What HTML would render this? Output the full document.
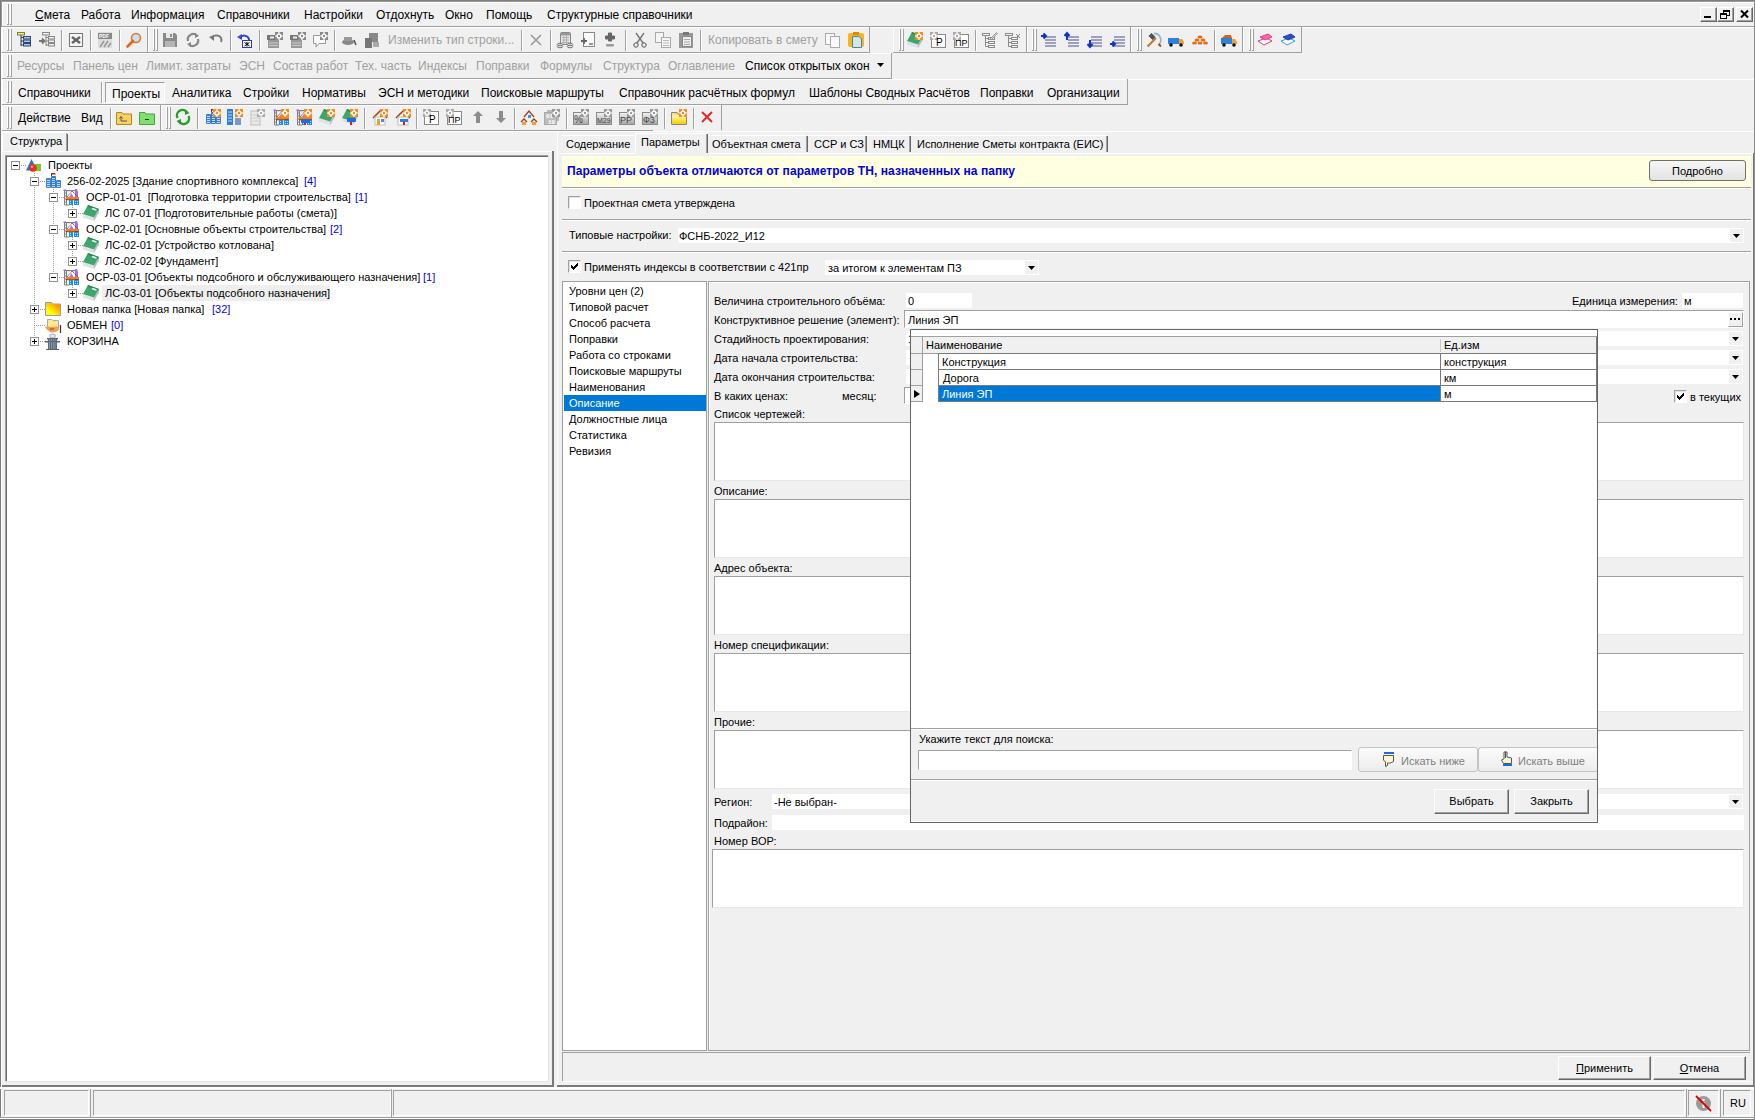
<!DOCTYPE html><html><head><meta charset="utf-8"><style>
html,body{margin:0;padding:0;width:1755px;height:1120px;overflow:hidden;background:#f0f0f0;position:relative}
.t{position:absolute;font-family:"Liberation Sans",sans-serif;font-size:11px;line-height:20px;white-space:nowrap;color:#000}
.r{position:absolute}
svg{position:absolute;overflow:visible}
</style></head><body>
<div class="r" style="left:0px;top:0px;width:1755px;height:1px;background:#7f7f7f;"></div>
<div class="r" style="left:0px;top:1px;width:1755px;height:1px;background:#9a9a9a;"></div>
<div class="r" style="left:0px;top:0px;width:1px;height:1120px;background:#7a7a7a;"></div>
<div class="r" style="left:1px;top:0px;width:1px;height:27px;background:#9a9a9a;"></div>
<div class="r" style="left:1px;top:27px;width:1px;height:1093px;background:#fff;"></div>
<div class="r" style="left:2px;top:2px;width:1753px;height:1px;background:#fff;"></div>
<div class="r" style="left:2px;top:2px;width:1px;height:24px;background:#fff;"></div>
<div class="r" style="left:7px;top:4px;width:1px;height:21px;background:#fff;"></div>
<div class="r" style="left:8px;top:4px;width:1px;height:21px;background:#a0a0a0;"></div>
<div class="r" style="left:10px;top:4px;width:1px;height:21px;background:#fff;"></div>
<div class="r" style="left:11px;top:4px;width:1px;height:21px;background:#a0a0a0;"></div>
<div class="r" style="left:7px;top:24px;width:1px;height:1px;background:#a0a0a0;"></div>
<div class="r" style="left:10px;top:24px;width:1px;height:1px;background:#a0a0a0;"></div>
<div class="t" style="left:35px;top:5px;font-size:12px;"><u>С</u>мета</div>
<div class="t" style="left:81px;top:5px;font-size:12px;">Работа</div>
<div class="t" style="left:131px;top:5px;font-size:12px;">Информация</div>
<div class="t" style="left:217px;top:5px;font-size:12px;">Справочники</div>
<div class="t" style="left:304px;top:5px;font-size:12px;">Настройки</div>
<div class="t" style="left:376px;top:5px;font-size:12px;">Отдохнуть</div>
<div class="t" style="left:445px;top:5px;font-size:12px;">Окно</div>
<div class="t" style="left:486px;top:5px;font-size:12px;">Помощь</div>
<div class="t" style="left:547px;top:5px;font-size:12px;">Структурные справочники</div>
<div class="r" style="left:2px;top:26px;width:1753px;height:1px;background:#a0a0a0;"></div>
<div class="r" style="left:2px;top:27px;width:1753px;height:1px;background:#fff;"></div>
<div class="r" style="left:1700px;top:7px;width:17px;height:15px;background:#f0f0f0;border:1px solid;border-color:#fff #696969 #696969 #fff;box-sizing:border-box;box-shadow:inset -1px -1px #a0a0a0;"></div>
<div class="r" style="left:1704px;top:16px;width:7px;height:2px;background:#000;"></div>
<div class="r" style="left:1717px;top:7px;width:17px;height:15px;background:#f0f0f0;border:1px solid;border-color:#fff #696969 #696969 #fff;box-sizing:border-box;box-shadow:inset -1px -1px #a0a0a0;"></div>
<svg style="left:1716px;top:7px" width="17" height="15"><rect x="7.5" y="3.5" width="6" height="5" fill="none" stroke="#000"/><rect x="7" y="3" width="7" height="2" fill="#000"/><rect x="4.5" y="6.5" width="6" height="5" fill="#f0f0f0" stroke="#000"/><rect x="4" y="6" width="7" height="2" fill="#000"/></svg>
<div class="r" style="left:1736px;top:7px;width:17px;height:15px;background:#f0f0f0;border:1px solid;border-color:#fff #696969 #696969 #fff;box-sizing:border-box;box-shadow:inset -1px -1px #a0a0a0;"></div>
<svg style="left:1736px;top:7px" width="17" height="15"><path d="M5 3.5 L12 10.5 M12 3.5 L5 10.5" stroke="#000" stroke-width="2"/></svg>
<div class="r" style="left:2px;top:27px;width:146px;height:26px;background:#f0f0f0;"></div>
<div class="r" style="left:2px;top:27px;width:146px;height:1px;background:#fff;"></div>
<div class="r" style="left:2px;top:27px;width:1px;height:26px;background:#fff;"></div>
<div class="r" style="left:2px;top:52px;width:146px;height:1px;background:#a0a0a0;"></div>
<div class="r" style="left:147px;top:27px;width:1px;height:26px;background:#a0a0a0;"></div>
<div class="r" style="left:7px;top:29px;width:1px;height:22px;background:#fff;"></div>
<div class="r" style="left:8px;top:29px;width:1px;height:22px;background:#a0a0a0;"></div>
<div class="r" style="left:10px;top:29px;width:1px;height:22px;background:#fff;"></div>
<div class="r" style="left:11px;top:29px;width:1px;height:22px;background:#a0a0a0;"></div>
<div class="r" style="left:7px;top:50px;width:1px;height:1px;background:#a0a0a0;"></div>
<div class="r" style="left:10px;top:50px;width:1px;height:1px;background:#a0a0a0;"></div>
<svg style="left:17px;top:32px" width="16" height="16" viewBox="0 0 16 16"><rect x="0.5" y="0.5" width="7" height="2.5" fill="#ff0" stroke="#777"/><path d="M4 3 V14 M4 5.5 H6 M4 9 H6 M4 13 H6" stroke="#334" fill="none"/><rect x="6.5" y="4.5" width="7" height="2.5" fill="#9cf" stroke="#346"/><rect x="6.5" y="8" width="7" height="2.5" fill="#9cf" stroke="#346"/><rect x="6.5" y="11.5" width="7" height="2.5" fill="#9cf" stroke="#346"/></svg>
<svg style="left:39px;top:32px" width="16" height="16" viewBox="0 0 16 16"><rect x="3.5" y="0.5" width="7" height="2.5" fill="#eee" stroke="#888"/><path d="M7 3 V14 M7 5.5 H9 M7 9 H9 M7 13 H9" stroke="#888" fill="none"/><rect x="9.5" y="4.5" width="6" height="2.5" fill="#eee" stroke="#888"/><rect x="9.5" y="8" width="6" height="2.5" fill="#eee" stroke="#888"/><rect x="9.5" y="11.5" width="6" height="2.5" fill="#eee" stroke="#888"/><path d="M0 9 H5 M3 6.5 L5.5 9 L3 11.5" stroke="#777" stroke-width="1.8" fill="none"/></svg>
<div class="r" style="left:61px;top:30px;width:1px;height:21px;background:#a0a0a0;"></div>
<div class="r" style="left:62px;top:30px;width:1px;height:21px;background:#fff;"></div>
<svg style="left:68px;top:32px" width="16" height="16" viewBox="0 0 16 16"><rect x="1.5" y="1.5" width="13" height="13" fill="#f4f4f4" stroke="#777"/><path d="M4 5 L12 11 M12 5 L4 11" stroke="#666" stroke-width="2.5"/></svg>
<div class="r" style="left:90px;top:30px;width:1px;height:21px;background:#a0a0a0;"></div>
<div class="r" style="left:91px;top:30px;width:1px;height:21px;background:#fff;"></div>
<svg style="left:97px;top:32px" width="16" height="16" viewBox="0 0 16 16"><rect x="1" y="0" width="14" height="16" fill="#ddd"/><rect x="1" y="1" width="14" height="6" fill="#888"/><text x="2" y="6" font-size="5" font-family="Liberation Sans" font-weight="bold" fill="#fff">PDF</text><path d="M3 15 L7 9 M7 15 L11 9 M11 15 L14 11" stroke="#999" stroke-width="1.5"/></svg>
<div class="r" style="left:119px;top:30px;width:1px;height:21px;background:#a0a0a0;"></div>
<div class="r" style="left:120px;top:30px;width:1px;height:21px;background:#fff;"></div>
<svg style="left:126px;top:32px" width="16" height="16" viewBox="0 0 16 16"><circle cx="10" cy="6" r="4.5" fill="#cde" stroke="#d97930" stroke-width="1.6"/><path d="M7 9 L1.5 14.5" stroke="#e0661a" stroke-width="2.6" stroke-linecap="round"/></svg>
<div class="r" style="left:148px;top:27px;width:722px;height:26px;background:#f0f0f0;"></div>
<div class="r" style="left:148px;top:27px;width:722px;height:1px;background:#fff;"></div>
<div class="r" style="left:148px;top:27px;width:1px;height:26px;background:#fff;"></div>
<div class="r" style="left:148px;top:52px;width:722px;height:1px;background:#a0a0a0;"></div>
<div class="r" style="left:869px;top:27px;width:1px;height:26px;background:#a0a0a0;"></div>
<div class="r" style="left:153px;top:29px;width:1px;height:22px;background:#fff;"></div>
<div class="r" style="left:154px;top:29px;width:1px;height:22px;background:#a0a0a0;"></div>
<div class="r" style="left:156px;top:29px;width:1px;height:22px;background:#fff;"></div>
<div class="r" style="left:157px;top:29px;width:1px;height:22px;background:#a0a0a0;"></div>
<div class="r" style="left:153px;top:50px;width:1px;height:1px;background:#a0a0a0;"></div>
<div class="r" style="left:156px;top:50px;width:1px;height:1px;background:#a0a0a0;"></div>
<svg style="left:162px;top:32px" width="16" height="16" viewBox="0 0 16 16"><path d="M1 1 H13 L15 3 V15 H1 Z" fill="#8a8a8a"/><rect x="4" y="1" width="7" height="5" fill="#e8e8e8"/><rect x="8" y="2" width="2" height="3" fill="#8a8a8a"/><rect x="3" y="9" width="10" height="6" fill="#b5b5b5"/></svg>
<svg style="left:185px;top:32px" width="16" height="16" viewBox="0 0 16 16"><path d="M3 9 A5.5 5.5 0 0 1 12 3.5 M13 7 A5.5 5.5 0 0 1 4 12.5" stroke="#888" stroke-width="2.2" fill="none"/><path d="M10 1 L14 4 L10 6 Z M6 15 L2 12 L6 10 Z" fill="#888"/></svg>
<svg style="left:208px;top:32px" width="16" height="16" viewBox="0 0 16 16"><path d="M4 6 A5 4.5 0 0 1 13 10" stroke="#777" stroke-width="2" fill="none"/><path d="M1 5 L6 3 L6 9 Z" fill="#777"/></svg>
<div class="r" style="left:230px;top:30px;width:1px;height:21px;background:#a0a0a0;"></div>
<div class="r" style="left:231px;top:30px;width:1px;height:21px;background:#fff;"></div>
<svg style="left:237px;top:32px" width="16" height="16" viewBox="0 0 16 16"><path d="M3 6 A5 5 0 0 1 12 7 V9" stroke="#3348d0" stroke-width="2" fill="none"/><path d="M0 5 L5 2 L5 8 Z" fill="#3348d0"/><rect x="5.5" y="8.5" width="9" height="7" fill="#fff" stroke="#2a3bb0"/><path d="M7.5 10.5 L12.5 14 M12.5 10.5 L7.5 14 M10 10 V14.5" stroke="#000" stroke-width="1"/></svg>
<div class="r" style="left:259px;top:30px;width:1px;height:21px;background:#a0a0a0;"></div>
<div class="r" style="left:260px;top:30px;width:1px;height:21px;background:#fff;"></div>
<svg style="left:267px;top:32px" width="16" height="16" viewBox="0 0 16 16"><rect x="0" y="3" width="13" height="5" fill="#777"/><rect x="1" y="8" width="11" height="8" fill="#999"/><path d="M2 11 H11 M2 13.5 H11" stroke="#ccc"/><rect x="3" y="4.5" width="4" height="2" fill="#eee"/><rect x="8" y="0" width="8" height="8" fill="#888"/><circle cx="12" cy="4" r="2.6" fill="#fff"/><path d="M12 0 V8 M8 4 H16" stroke="#fff" stroke-width="1.2"/><circle cx="12" cy="4" r="1.2" fill="#888"/></svg>
<svg style="left:290px;top:32px" width="16" height="16" viewBox="0 0 16 16"><rect x="0" y="3" width="13" height="5" fill="#777"/><rect x="1" y="8" width="11" height="8" fill="#999"/><path d="M2 11 H11 M2 13.5 H11" stroke="#ccc"/><rect x="3" y="4.5" width="4" height="2" fill="#eee"/><rect x="8" y="0" width="8" height="8" fill="#888"/><circle cx="12" cy="4" r="2.6" fill="#fff"/><path d="M12 0 V8 M8 4 H16" stroke="#fff" stroke-width="1.2"/><circle cx="12" cy="4" r="1.2" fill="#888"/></svg>
<svg style="left:312px;top:32px" width="16" height="16" viewBox="0 0 16 16"><path d="M1.5 3.5 H13.5 V11.5 H7 L4 15 V11.5 H1.5 Z" fill="#fafafa" stroke="#999"/><rect x="8" y="0" width="8" height="8" fill="#888"/><circle cx="12" cy="4" r="2.6" fill="#fff"/><path d="M12 0 V8 M8 4 H16" stroke="#fff" stroke-width="1.2"/><circle cx="12" cy="4" r="1.2" fill="#888"/></svg>
<div class="r" style="left:334px;top:30px;width:1px;height:21px;background:#a0a0a0;"></div>
<div class="r" style="left:335px;top:30px;width:1px;height:21px;background:#fff;"></div>
<svg style="left:341px;top:32px" width="16" height="16" viewBox="0 0 16 16"><ellipse cx="7" cy="10" rx="6" ry="3" fill="#888"/><rect x="3" y="5" width="8" height="4" fill="#999"/><path d="M13 8 L15 13" stroke="#555" stroke-width="1.5"/></svg>
<svg style="left:364px;top:32px" width="16" height="16" viewBox="0 0 16 16"><rect x="5" y="1" width="9" height="9" fill="#888"/><rect x="1" y="6" width="7" height="10" fill="#777"/><rect x="9" y="10" width="6" height="5" fill="#aaa"/></svg>
<div class="t" style="left:388px;top:30px;font-size:12px;color:#a0a0a0;">Изменить тип строки...</div>
<div class="r" style="left:521px;top:30px;width:1px;height:21px;background:#a0a0a0;"></div>
<div class="r" style="left:522px;top:30px;width:1px;height:21px;background:#fff;"></div>
<svg style="left:529px;top:33px" width="16" height="16" viewBox="0 0 16 16"><path d="M2 2 L12 12 M12 2 L2 12" stroke="#999" stroke-width="1.6"/></svg>
<div class="r" style="left:550px;top:30px;width:1px;height:21px;background:#a0a0a0;"></div>
<div class="r" style="left:551px;top:30px;width:1px;height:21px;background:#fff;"></div>
<svg style="left:557px;top:32px" width="16" height="16" viewBox="0 0 16 16"><rect x="3.5" y="0.5" width="10" height="12" rx="1" fill="#e6e6e6" stroke="#888"/><rect x="4" y="1" width="9" height="2.5" fill="#999"/><path d="M5 5.5 H12 M5 8 H12 M5 10.5 H12 M7 4 V12 M9.5 4 V12" stroke="#b0b0b0"/><ellipse cx="3" cy="12.5" rx="2.8" ry="1.3" fill="#ddd" stroke="#777"/><ellipse cx="3" cy="14.5" rx="2.8" ry="1.3" fill="#ddd" stroke="#777"/><ellipse cx="13" cy="12.5" rx="2.8" ry="1.3" fill="#ddd" stroke="#777"/><ellipse cx="13" cy="14.5" rx="2.8" ry="1.3" fill="#ddd" stroke="#777"/></svg>
<svg style="left:580px;top:32px" width="16" height="16" viewBox="0 0 16 16"><rect x="3.5" y="0.5" width="11" height="14" fill="#fafafa" stroke="#888"/><path d="M1 9 H7 M4 6 V12" stroke="#666" stroke-width="1.8"/><path d="M9 12 H13" stroke="#777" stroke-width="1.5"/></svg>
<svg style="left:602px;top:32px" width="16" height="16" viewBox="0 0 16 16"><path d="M6.5 1 H9.5 V4 H12.5 V7 H9.5 V9 H6.5 V7 H3.5 V4 H6.5 Z" fill="#666" stroke="#666" stroke-linejoin="round"/><rect x="4" y="12" width="8" height="2.5" rx="1" fill="#999"/></svg>
<div class="r" style="left:625px;top:30px;width:1px;height:21px;background:#a0a0a0;"></div>
<div class="r" style="left:626px;top:30px;width:1px;height:21px;background:#fff;"></div>
<svg style="left:632px;top:32px" width="16" height="16" viewBox="0 0 16 16"><path d="M4 1 L11 11 M12 1 L5 11" stroke="#777" stroke-width="1.4"/><circle cx="4" cy="13" r="2.2" fill="none" stroke="#555"/><circle cx="12" cy="13" r="2.2" fill="none" stroke="#555"/></svg>
<svg style="left:655px;top:32px" width="16" height="16" viewBox="0 0 16 16"><rect x="0.5" y="0.5" width="8" height="10" fill="#f5f5f5" stroke="#aaa"/><rect x="6.5" y="5.5" width="9" height="10" fill="#f5f5f5" stroke="#aaa"/><path d="M8 8.5 H14 M8 11 H14 M8 13.5 H14" stroke="#bbb"/></svg>
<svg style="left:678px;top:32px" width="16" height="16" viewBox="0 0 16 16"><rect x="1" y="1" width="14" height="15" fill="#999"/><rect x="5" y="0" width="6" height="3" fill="#777"/><rect x="4.5" y="4.5" width="9" height="10" fill="#eee" stroke="#888"/><path d="M6 7.5 H12 M6 10 H12 M6 12.5 H12" stroke="#aaa"/></svg>
<div class="r" style="left:700px;top:30px;width:1px;height:21px;background:#a0a0a0;"></div>
<div class="r" style="left:701px;top:30px;width:1px;height:21px;background:#fff;"></div>
<div class="t" style="left:708px;top:30px;font-size:12px;color:#a0a0a0;">Копировать в смету</div>
<svg style="left:825px;top:32px" width="16" height="16" viewBox="0 0 16 16"><rect x="0.5" y="1.5" width="9" height="11" fill="#fafafa" stroke="#aaa"/><rect x="5.5" y="4.5" width="9" height="11" fill="#fafafa" stroke="#aaa"/></svg>
<svg style="left:848px;top:32px" width="16" height="16" viewBox="0 0 16 16"><rect x="0" y="1" width="16" height="14" rx="2" fill="#f5b520"/><rect x="5" y="0" width="6" height="3" fill="#d58a10"/><path d="M4.5 4.5 H11 L13.5 7 V15.5 H4.5 Z" fill="#cfe8f0" stroke="#5a7f90"/></svg>
<div class="r" style="left:893px;top:27px;width:134px;height:26px;background:#f0f0f0;"></div>
<div class="r" style="left:893px;top:27px;width:134px;height:1px;background:#fff;"></div>
<div class="r" style="left:893px;top:27px;width:1px;height:26px;background:#fff;"></div>
<div class="r" style="left:893px;top:52px;width:134px;height:1px;background:#a0a0a0;"></div>
<div class="r" style="left:1026px;top:27px;width:1px;height:26px;background:#a0a0a0;"></div>
<div class="r" style="left:899px;top:29px;width:1px;height:22px;background:#fff;"></div>
<div class="r" style="left:900px;top:29px;width:1px;height:22px;background:#a0a0a0;"></div>
<div class="r" style="left:902px;top:29px;width:1px;height:22px;background:#fff;"></div>
<div class="r" style="left:903px;top:29px;width:1px;height:22px;background:#a0a0a0;"></div>
<div class="r" style="left:899px;top:50px;width:1px;height:1px;background:#a0a0a0;"></div>
<div class="r" style="left:902px;top:50px;width:1px;height:1px;background:#a0a0a0;"></div>
<svg style="left:907px;top:32px" width="16" height="16" viewBox="0 0 16 16"><path d="M0 9 L11 12.5 L11 16 L0 12.5 Z" fill="#dde2e8"/><path d="M11 12.5 L16 4 L16 7.5 L11 16 Z" fill="#b5bcc5"/><path d="M5 0 L16 4 L11 12.5 L0 9 Z" fill="#3ea56c"/><path d="M5 0 L16 4 L15 5.5 L4.5 1.5 Z" fill="#2a8a55"/><path d="M9 3.5 L13.5 5" stroke="#e8f8ee" stroke-width="1.4"/><rect x="8" y="0" width="8" height="8" fill="#f28a1e"/><circle cx="12" cy="4" r="2.6" fill="#fff"/><path d="M12 0 V8 M8 4 H16" stroke="#fff" stroke-width="1.2"/><circle cx="12" cy="4" r="1.2" fill="#f28a1e"/></svg>
<svg style="left:930px;top:32px" width="16" height="16" viewBox="0 0 16 16"><rect x="1.5" y="2.5" width="14" height="13" fill="#fff" stroke="#888"/><rect x="0" y="0" width="8" height="8" fill="#aaa"/><circle cx="4" cy="4" r="2.6" fill="#fff"/><path d="M4 0 V8 M0 4 H8" stroke="#fff" stroke-width="1.2"/><circle cx="4" cy="4" r="1.2" fill="#aaa"/><text x="6" y="14" font-size="10" font-family="Liberation Sans" fill="#000">Р</text></svg>
<svg style="left:953px;top:32px" width="16" height="16" viewBox="0 0 16 16"><rect x="1.5" y="2.5" width="14" height="13" fill="#fff" stroke="#888"/><rect x="0" y="0" width="8" height="8" fill="#aaa"/><circle cx="4" cy="4" r="2.6" fill="#fff"/><path d="M4 0 V8 M0 4 H8" stroke="#fff" stroke-width="1.2"/><circle cx="4" cy="4" r="1.2" fill="#aaa"/><text x="2" y="14" font-size="9" font-family="Liberation Sans" fill="#000">ПР</text></svg>
<div class="r" style="left:975px;top:30px;width:1px;height:21px;background:#a0a0a0;"></div>
<div class="r" style="left:976px;top:30px;width:1px;height:21px;background:#fff;"></div>
<svg style="left:982px;top:32px" width="16" height="16" viewBox="0 0 16 16"><rect x="0.5" y="1.5" width="7" height="2" fill="#f4f4f4" stroke="#8a8a8a"/><path d="M3.5 3.5 V14.5 M3.5 6.5 H6 M3.5 10.5 H6 M3.5 14.5 H6" stroke="#8a8a8a" fill="none"/><rect x="6.5" y="5.5" width="6" height="2" fill="#f4f4f4" stroke="#8a8a8a"/><rect x="6.5" y="9.5" width="6" height="2" fill="#f4f4f4" stroke="#8a8a8a"/><rect x="6.5" y="13.5" width="6" height="2" fill="#f4f4f4" stroke="#8a8a8a"/><path d="M8 7 L14.5 0.5 L15.5 1.5 L9 8 Z" fill="#d8d8d8" stroke="#8a8a8a" stroke-width="0.8"/></svg>
<svg style="left:1005px;top:32px" width="16" height="16" viewBox="0 0 16 16"><rect x="0.5" y="1.5" width="7" height="2" fill="#f4f4f4" stroke="#8a8a8a"/><path d="M3.5 3.5 V14.5 M3.5 6.5 H6 M3.5 10.5 H6 M3.5 14.5 H6" stroke="#8a8a8a" fill="none"/><rect x="6.5" y="5.5" width="6" height="2" fill="#f4f4f4" stroke="#8a8a8a"/><rect x="6.5" y="9.5" width="6" height="2" fill="#f4f4f4" stroke="#8a8a8a"/><rect x="6.5" y="13.5" width="6" height="2" fill="#f4f4f4" stroke="#8a8a8a"/><path d="M11 2 L15 6 M15 2 L11 6" stroke="#8a8a8a" stroke-width="1"/></svg>
<div class="r" style="left:1027px;top:27px;width:104px;height:26px;background:#f0f0f0;"></div>
<div class="r" style="left:1027px;top:27px;width:104px;height:1px;background:#fff;"></div>
<div class="r" style="left:1027px;top:27px;width:1px;height:26px;background:#fff;"></div>
<div class="r" style="left:1027px;top:52px;width:104px;height:1px;background:#a0a0a0;"></div>
<div class="r" style="left:1130px;top:27px;width:1px;height:26px;background:#a0a0a0;"></div>
<div class="r" style="left:1032px;top:29px;width:1px;height:22px;background:#fff;"></div>
<div class="r" style="left:1033px;top:29px;width:1px;height:22px;background:#a0a0a0;"></div>
<div class="r" style="left:1035px;top:29px;width:1px;height:22px;background:#fff;"></div>
<div class="r" style="left:1036px;top:29px;width:1px;height:22px;background:#a0a0a0;"></div>
<div class="r" style="left:1032px;top:50px;width:1px;height:1px;background:#a0a0a0;"></div>
<div class="r" style="left:1035px;top:50px;width:1px;height:1px;background:#a0a0a0;"></div>
<svg style="left:1041px;top:32px" width="16" height="16" viewBox="0 0 16 16"><path d="M4 5 H15 M4 8 H15 M4 11 H15 M4 14 H15" stroke="#4a5090" stroke-width="1.1"/><path d="M0 4 H4 M2.5 1.5 L5 4 L2.5 6.5" stroke="#1030d0" stroke-width="2" fill="none"/></svg>
<svg style="left:1064px;top:32px" width="16" height="16" viewBox="0 0 16 16"><path d="M4 5 H15 M4 8 H15 M4 11 H15 M4 14 H15" stroke="#4a5090" stroke-width="1.1"/><path d="M3 8 V2 M0.5 4 L3 1 L5.5 4" stroke="#1030d0" stroke-width="2" fill="none"/></svg>
<svg style="left:1087px;top:32px" width="16" height="16" viewBox="0 0 16 16"><path d="M4 5 H15 M4 8 H15 M4 11 H15 M4 14 H15" stroke="#4a5090" stroke-width="1.1"/><path d="M3 8 V14 M0.5 12 L3 15 L5.5 12" stroke="#1030d0" stroke-width="2" fill="none"/></svg>
<svg style="left:1110px;top:32px" width="16" height="16" viewBox="0 0 16 16"><path d="M4 5 H15 M4 8 H15 M4 11 H15 M4 14 H15" stroke="#4a5090" stroke-width="1.1"/><path d="M0 12 H4 M2.5 9.5 L5 12 L2.5 14.5" stroke="#1030d0" stroke-width="2" fill="none"/></svg>
<div class="r" style="left:1131px;top:27px;width:112px;height:26px;background:#f0f0f0;"></div>
<div class="r" style="left:1131px;top:27px;width:112px;height:1px;background:#fff;"></div>
<div class="r" style="left:1131px;top:27px;width:1px;height:26px;background:#fff;"></div>
<div class="r" style="left:1131px;top:52px;width:112px;height:1px;background:#a0a0a0;"></div>
<div class="r" style="left:1242px;top:27px;width:1px;height:26px;background:#a0a0a0;"></div>
<div class="r" style="left:1137px;top:29px;width:1px;height:22px;background:#fff;"></div>
<div class="r" style="left:1138px;top:29px;width:1px;height:22px;background:#a0a0a0;"></div>
<div class="r" style="left:1140px;top:29px;width:1px;height:22px;background:#fff;"></div>
<div class="r" style="left:1141px;top:29px;width:1px;height:22px;background:#a0a0a0;"></div>
<div class="r" style="left:1137px;top:50px;width:1px;height:1px;background:#a0a0a0;"></div>
<div class="r" style="left:1140px;top:50px;width:1px;height:1px;background:#a0a0a0;"></div>
<svg style="left:1146px;top:32px" width="16" height="16" viewBox="0 0 16 16"><path d="M8 1.5 A6.5 6.5 0 0 1 13 12.5" stroke="#9ab8c0" stroke-width="1.8" fill="none"/><path d="M12.5 12 L15 14.5" stroke="#a05020" stroke-width="2"/><path d="M1.5 14.5 L10 6" stroke="#c07830" stroke-width="2.2"/><path d="M2.5 4 L5.5 1 L9.5 5 L6.5 8 Z" fill="#505050"/></svg>
<svg style="left:1168px;top:32px" width="16" height="16" viewBox="0 0 16 16"><rect x="0" y="6" width="11" height="6" fill="#2d7fe0"/><path d="M11 7 H14 L16 10 V12 H11 Z" fill="#f0a030"/><circle cx="3" cy="13" r="1.8" fill="#111"/><circle cx="13" cy="13" r="1.8" fill="#111"/></svg>
<svg style="left:1192px;top:32px" width="16" height="16" viewBox="0 0 16 16"><ellipse cx="8" cy="5" rx="2.5" ry="1.5" fill="#e86a10"/><ellipse cx="5" cy="8" rx="2.5" ry="1.5" fill="#e86a10"/><ellipse cx="11" cy="8" rx="2.5" ry="1.5" fill="#e86a10"/><ellipse cx="2.5" cy="11" rx="2.5" ry="1.5" fill="#e86a10"/><ellipse cx="8" cy="11" rx="2.5" ry="1.5" fill="#e86a10"/><ellipse cx="13.5" cy="11" rx="2.5" ry="1.5" fill="#e86a10"/></svg>
<div class="r" style="left:1214px;top:30px;width:1px;height:21px;background:#a0a0a0;"></div>
<div class="r" style="left:1215px;top:30px;width:1px;height:21px;background:#fff;"></div>
<svg style="left:1221px;top:32px" width="16" height="16" viewBox="0 0 16 16"><rect x="0" y="6" width="11" height="6" fill="#2d7fe0"/><path d="M1 6 L4 3 H10 L11 6 Z" fill="#e06010"/><path d="M11 7 H14 L16 10 V12 H11 Z" fill="#f0a030"/><circle cx="3" cy="13" r="1.8" fill="#111"/><circle cx="13" cy="13" r="1.8" fill="#111"/></svg>
<div class="r" style="left:1243px;top:27px;width:59px;height:26px;background:#f0f0f0;"></div>
<div class="r" style="left:1243px;top:27px;width:59px;height:1px;background:#fff;"></div>
<div class="r" style="left:1243px;top:27px;width:1px;height:26px;background:#fff;"></div>
<div class="r" style="left:1243px;top:52px;width:59px;height:1px;background:#a0a0a0;"></div>
<div class="r" style="left:1301px;top:27px;width:1px;height:26px;background:#a0a0a0;"></div>
<div class="r" style="left:1249px;top:29px;width:1px;height:22px;background:#fff;"></div>
<div class="r" style="left:1250px;top:29px;width:1px;height:22px;background:#a0a0a0;"></div>
<div class="r" style="left:1252px;top:29px;width:1px;height:22px;background:#fff;"></div>
<div class="r" style="left:1253px;top:29px;width:1px;height:22px;background:#a0a0a0;"></div>
<div class="r" style="left:1249px;top:50px;width:1px;height:1px;background:#a0a0a0;"></div>
<div class="r" style="left:1252px;top:50px;width:1px;height:1px;background:#a0a0a0;"></div>
<svg style="left:1257px;top:32px" width="16" height="16" viewBox="0 0 16 16"><path d="M1 9 L9 6 L15 9 L7 13 Z" fill="#fff" stroke="#e04050"/><path d="M3 5 L11 2 L15 5 L8 8 Z" fill="#f068b0" stroke="#e04080"/></svg>
<svg style="left:1280px;top:32px" width="16" height="16" viewBox="0 0 16 16"><path d="M1 9 L9 6 L15 9 L7 13 Z" fill="#fff" stroke="#30a0e0"/><path d="M3 5 L11 2 L15 5 L8 8 Z" fill="#3050d0" stroke="#2040a0"/></svg>
<div class="r" style="left:2px;top:53px;width:890px;height:26px;background:#f0f0f0;"></div>
<div class="r" style="left:2px;top:53px;width:890px;height:1px;background:#fff;"></div>
<div class="r" style="left:2px;top:53px;width:1px;height:26px;background:#fff;"></div>
<div class="r" style="left:2px;top:78px;width:890px;height:1px;background:#a0a0a0;"></div>
<div class="r" style="left:891px;top:53px;width:1px;height:26px;background:#a0a0a0;"></div>
<div class="r" style="left:7px;top:55px;width:1px;height:22px;background:#fff;"></div>
<div class="r" style="left:8px;top:55px;width:1px;height:22px;background:#a0a0a0;"></div>
<div class="r" style="left:10px;top:55px;width:1px;height:22px;background:#fff;"></div>
<div class="r" style="left:11px;top:55px;width:1px;height:22px;background:#a0a0a0;"></div>
<div class="r" style="left:7px;top:76px;width:1px;height:1px;background:#a0a0a0;"></div>
<div class="r" style="left:10px;top:76px;width:1px;height:1px;background:#a0a0a0;"></div>
<div class="t" style="left:17px;top:56px;font-size:12px;color:#a0a0a0;">Ресурсы</div>
<div class="t" style="left:73px;top:56px;font-size:12px;color:#a0a0a0;">Панель цен</div>
<div class="t" style="left:146px;top:56px;font-size:12px;color:#a0a0a0;">Лимит. затраты</div>
<div class="t" style="left:239px;top:56px;font-size:12px;color:#a0a0a0;">ЭСН</div>
<div class="t" style="left:273px;top:56px;font-size:12px;color:#a0a0a0;">Состав работ</div>
<div class="t" style="left:355px;top:56px;font-size:12px;color:#a0a0a0;">Тех. часть</div>
<div class="t" style="left:418px;top:56px;font-size:12px;color:#a0a0a0;">Индексы</div>
<div class="t" style="left:476px;top:56px;font-size:12px;color:#a0a0a0;">Поправки</div>
<div class="t" style="left:540px;top:56px;font-size:12px;color:#a0a0a0;">Формулы</div>
<div class="t" style="left:603px;top:56px;font-size:12px;color:#a0a0a0;">Структура</div>
<div class="t" style="left:668px;top:56px;font-size:12px;color:#a0a0a0;">Оглавление</div>
<div class="t" style="left:745px;top:56px;font-size:12px;">Список открытых окон</div>
<svg style="left:877px;top:63px" width="7" height="4" viewBox="0 0 7 4"><path d="M0 0 H7 L3.5 4 Z" fill="#000"/></svg>
<div class="r" style="left:2px;top:79px;width:1753px;height:1px;background:#fff;"></div>
<div class="r" style="left:2px;top:79px;width:1126px;height:26px;background:#f0f0f0;"></div>
<div class="r" style="left:2px;top:79px;width:1126px;height:1px;background:#fff;"></div>
<div class="r" style="left:2px;top:79px;width:1px;height:26px;background:#fff;"></div>
<div class="r" style="left:2px;top:104px;width:1126px;height:1px;background:#a0a0a0;"></div>
<div class="r" style="left:1127px;top:79px;width:1px;height:26px;background:#a0a0a0;"></div>
<div class="r" style="left:7px;top:81px;width:1px;height:22px;background:#fff;"></div>
<div class="r" style="left:8px;top:81px;width:1px;height:22px;background:#a0a0a0;"></div>
<div class="r" style="left:10px;top:81px;width:1px;height:22px;background:#fff;"></div>
<div class="r" style="left:11px;top:81px;width:1px;height:22px;background:#a0a0a0;"></div>
<div class="r" style="left:7px;top:102px;width:1px;height:1px;background:#a0a0a0;"></div>
<div class="r" style="left:10px;top:102px;width:1px;height:1px;background:#a0a0a0;"></div>
<div class="t" style="left:18px;top:83px;font-size:12px;">Справочники</div>
<div class="r" style="left:101px;top:82px;width:1px;height:21px;background:#a0a0a0;"></div>
<div class="r" style="left:102px;top:82px;width:1px;height:21px;background:#fff;"></div>
<div class="r" style="left:105px;top:82px;width:60px;height:21px;background:#f5f5f5;border:1px solid;border-color:#a0a0a0 #fff #fff #a0a0a0;box-sizing:border-box;"></div>
<div class="t" style="left:112px;top:84px;font-size:12px;">Проекты</div>
<div class="t" style="left:172px;top:83px;font-size:12px;">Аналитика</div>
<div class="t" style="left:243px;top:83px;font-size:12px;">Стройки</div>
<div class="t" style="left:302px;top:83px;font-size:12px;">Нормативы</div>
<div class="t" style="left:378px;top:83px;font-size:12px;">ЭСН и методики</div>
<div class="t" style="left:481px;top:83px;font-size:12px;">Поисковые маршруты</div>
<div class="t" style="left:619px;top:83px;font-size:12px;">Справочник расчётных формул</div>
<div class="t" style="left:809px;top:83px;font-size:12px;">Шаблоны Сводных Расчётов</div>
<div class="t" style="left:980px;top:83px;font-size:12px;">Поправки</div>
<div class="t" style="left:1047px;top:83px;font-size:12px;">Организации</div>
<div class="r" style="left:2px;top:105px;width:159px;height:26px;background:#f0f0f0;"></div>
<div class="r" style="left:2px;top:105px;width:159px;height:1px;background:#fff;"></div>
<div class="r" style="left:2px;top:105px;width:1px;height:26px;background:#fff;"></div>
<div class="r" style="left:2px;top:130px;width:159px;height:1px;background:#a0a0a0;"></div>
<div class="r" style="left:160px;top:105px;width:1px;height:26px;background:#a0a0a0;"></div>
<div class="r" style="left:7px;top:107px;width:1px;height:22px;background:#fff;"></div>
<div class="r" style="left:8px;top:107px;width:1px;height:22px;background:#a0a0a0;"></div>
<div class="r" style="left:10px;top:107px;width:1px;height:22px;background:#fff;"></div>
<div class="r" style="left:11px;top:107px;width:1px;height:22px;background:#a0a0a0;"></div>
<div class="r" style="left:7px;top:128px;width:1px;height:1px;background:#a0a0a0;"></div>
<div class="r" style="left:10px;top:128px;width:1px;height:1px;background:#a0a0a0;"></div>
<div class="t" style="left:18px;top:108px;font-size:12px;">Действие</div>
<div class="t" style="left:81px;top:108px;font-size:12px;">Вид</div>
<div class="r" style="left:110px;top:108px;width:1px;height:21px;background:#a0a0a0;"></div>
<div class="r" style="left:111px;top:108px;width:1px;height:21px;background:#fff;"></div>
<svg style="left:116px;top:109px" width="16" height="16" viewBox="0 0 16 16"><path d="M0.5 3.5 H6 L7 5 H15.5 V15.5 H0.5 Z" fill="#f8d060" stroke="#b08a20"/><path d="M5 8 V12 H11 M3.5 9.5 L5 7.5 L6.5 9.5" stroke="#555" fill="none"/></svg>
<svg style="left:139px;top:109px" width="16" height="16" viewBox="0 0 16 16"><path d="M0.5 3.5 H6 L7 5 H15.5 V15.5 H0.5 Z" fill="#7fe070" stroke="#50a040"/><path d="M6 10.5 H10" stroke="#333"/></svg>
<div class="r" style="left:161px;top:105px;width:561px;height:26px;background:#f0f0f0;"></div>
<div class="r" style="left:161px;top:105px;width:561px;height:1px;background:#fff;"></div>
<div class="r" style="left:161px;top:105px;width:1px;height:26px;background:#fff;"></div>
<div class="r" style="left:161px;top:130px;width:561px;height:1px;background:#a0a0a0;"></div>
<div class="r" style="left:721px;top:105px;width:1px;height:26px;background:#a0a0a0;"></div>
<div class="r" style="left:653px;top:130px;width:69px;height:1px;background:#f0f0f0;"></div>
<div class="r" style="left:166px;top:107px;width:1px;height:22px;background:#fff;"></div>
<div class="r" style="left:167px;top:107px;width:1px;height:22px;background:#a0a0a0;"></div>
<div class="r" style="left:169px;top:107px;width:1px;height:22px;background:#fff;"></div>
<div class="r" style="left:170px;top:107px;width:1px;height:22px;background:#a0a0a0;"></div>
<div class="r" style="left:166px;top:128px;width:1px;height:1px;background:#a0a0a0;"></div>
<div class="r" style="left:169px;top:128px;width:1px;height:1px;background:#a0a0a0;"></div>
<svg style="left:175px;top:109px" width="16" height="16" viewBox="0 0 16 16"><path d="M2.5 9 A5.5 5.5 0 0 1 12 3.5 M13.5 7 A5.5 5.5 0 0 1 4 12.5" stroke="#2a9a2a" stroke-width="2.4" fill="none"/><path d="M10 0.5 L14.5 4 L10 6 Z M6 15.5 L1.5 12 L6 10 Z" fill="#2a9a2a"/></svg>
<div class="r" style="left:197px;top:108px;width:1px;height:21px;background:#a0a0a0;"></div>
<div class="r" style="left:198px;top:108px;width:1px;height:21px;background:#fff;"></div>
<svg style="left:205px;top:109px" width="16" height="16" viewBox="0 0 16 16"><rect x="1" y="5" width="5" height="10" rx="1" fill="#3a82d8"/><rect x="6" y="3" width="5" height="12" rx="1" fill="#2f78d8"/><rect x="11" y="7" width="5" height="8" rx="1" fill="#3a82d8"/><path d="M2 7.5 H5 M2 9.5 H5 M2 11.5 H5 M2 13.5 H5 M7 5.5 H10 M7 7.5 H10 M7 9.5 H10 M7 11.5 H10 M7 13.5 H10 M12 9.5 H15 M12 11.5 H15 M12 13.5 H15" stroke="#c8dcf8"/><rect x="6" y="0" width="1" height="3" fill="#444"/><path d="M7 0 H10 L11 1.5 H7 Z" fill="#e81010"/><rect x="8" y="0" width="8" height="8" fill="#f28a1e"/><circle cx="12" cy="4" r="2.6" fill="#fff"/><path d="M12 0 V8 M8 4 H16" stroke="#fff" stroke-width="1.2"/><circle cx="12" cy="4" r="1.2" fill="#f28a1e"/></svg>
<svg style="left:227px;top:109px" width="16" height="16" viewBox="0 0 16 16"><rect x="0" y="0" width="6" height="16" fill="#2f7fd8"/><path d="M1 3 H5 M1 6 H5 M1 9 H5 M1 12 H5" stroke="#bcd8f8"/><rect x="8" y="9" width="6" height="7" fill="#7799cc"/><rect x="8" y="0" width="8" height="8" fill="#f28a1e"/><circle cx="12" cy="4" r="2.6" fill="#fff"/><path d="M12 0 V8 M8 4 H16" stroke="#fff" stroke-width="1.2"/><circle cx="12" cy="4" r="1.2" fill="#f28a1e"/></svg>
<svg style="left:250px;top:109px" width="16" height="16" viewBox="0 0 16 16"><rect x="1" y="2" width="9" height="14" fill="#eaeaea" stroke="#bbb"/><path d="M2.5 6 H8.5 M2.5 9 H8.5 M2.5 12 H8.5" stroke="#ccc"/><rect x="7" y="0" width="8" height="8" fill="#aaa"/><circle cx="11" cy="4" r="2.6" fill="#fff"/><path d="M11 0 V8 M7 4 H15" stroke="#fff" stroke-width="1.2"/><circle cx="11" cy="4" r="1.2" fill="#aaa"/></svg>
<svg style="left:273px;top:109px" width="16" height="16" viewBox="0 0 16 16"><rect x="1" y="1" width="12" height="1.2" fill="#808080"/><path d="M1.5 2 V16 M3.5 2 V16 M1.5 16 H6" stroke="#808080" fill="none"/><path d="M1.5 4 H3.5 M1.5 7 H3.5 M1.5 10 H3.5 M1.5 13 H3.5" stroke="#808080"/><path d="M0.5 0.5 H3 V2 H0.5 Z" fill="#9a60f0"/><path d="M12 0 H14 L15 3 V11 H12 Z" fill="#a070f0"/><path d="M6 8 L8.5 4 L10.5 8 Z" fill="#a878f0"/><path d="M4 8 L9 2 L15 8" stroke="#7a2020" stroke-width="0.9" stroke-dasharray="1 0.6" fill="none"/><rect x="3" y="8" width="13" height="2.2" fill="#f88010"/><rect x="3" y="10.2" width="13" height="1" fill="#8a3018"/><rect x="6" y="11" width="4" height="5" fill="#1c8cf8"/><rect x="11" y="11" width="5" height="5" fill="#1c8cf8"/><path d="M7 12.5 H9 M7 14.5 H9 M12 12.5 H15 M12 14.5 H15" stroke="#bfe0ff" stroke-dasharray="1 1"/><rect x="8" y="0" width="8" height="8" fill="#f28a1e"/><circle cx="12" cy="4" r="2.6" fill="#fff"/><path d="M12 0 V8 M8 4 H16" stroke="#fff" stroke-width="1.2"/><circle cx="12" cy="4" r="1.2" fill="#f28a1e"/></svg>
<svg style="left:296px;top:109px" width="16" height="16" viewBox="0 0 16 16"><rect x="1" y="1" width="12" height="1.2" fill="#808080"/><path d="M1.5 2 V16 M3.5 2 V16 M1.5 16 H6" stroke="#808080" fill="none"/><path d="M1.5 4 H3.5 M1.5 7 H3.5 M1.5 10 H3.5 M1.5 13 H3.5" stroke="#808080"/><path d="M0.5 0.5 H3 V2 H0.5 Z" fill="#9a60f0"/><path d="M12 0 H14 L15 3 V11 H12 Z" fill="#a070f0"/><path d="M6 8 L8.5 4 L10.5 8 Z" fill="#a878f0"/><path d="M4 8 L9 2 L15 8" stroke="#7a2020" stroke-width="0.9" stroke-dasharray="1 0.6" fill="none"/><rect x="3" y="8" width="13" height="2.2" fill="#f88010"/><rect x="3" y="10.2" width="13" height="1" fill="#8a3018"/><rect x="6" y="11" width="4" height="5" fill="#1c8cf8"/><rect x="11" y="11" width="5" height="5" fill="#1c8cf8"/><path d="M7 12.5 H9 M7 14.5 H9 M12 12.5 H15 M12 14.5 H15" stroke="#bfe0ff" stroke-dasharray="1 1"/><rect x="5" y="10" width="9" height="4" rx="1" fill="#1c6ee0"/><rect x="8" y="14" width="2" height="2" fill="#d02020"/><rect x="8" y="0" width="8" height="8" fill="#f28a1e"/><circle cx="12" cy="4" r="2.6" fill="#fff"/><path d="M12 0 V8 M8 4 H16" stroke="#fff" stroke-width="1.2"/><circle cx="12" cy="4" r="1.2" fill="#f28a1e"/></svg>
<svg style="left:319px;top:109px" width="16" height="16" viewBox="0 0 16 16"><path d="M0 9 L11 12.5 L11 16 L0 12.5 Z" fill="#dde2e8"/><path d="M11 12.5 L16 4 L16 7.5 L11 16 Z" fill="#b5bcc5"/><path d="M5 0 L16 4 L11 12.5 L0 9 Z" fill="#3ea56c"/><path d="M5 0 L16 4 L15 5.5 L4.5 1.5 Z" fill="#2a8a55"/><path d="M9 3.5 L13.5 5" stroke="#e8f8ee" stroke-width="1.4"/><rect x="8" y="0" width="8" height="8" fill="#f28a1e"/><circle cx="12" cy="4" r="2.6" fill="#fff"/><path d="M12 0 V8 M8 4 H16" stroke="#fff" stroke-width="1.2"/><circle cx="12" cy="4" r="1.2" fill="#f28a1e"/></svg>
<svg style="left:342px;top:109px" width="16" height="16" viewBox="0 0 16 16"><path d="M0 9 L11 12.5 L11 16 L0 12.5 Z" fill="#dde2e8"/><path d="M11 12.5 L16 4 L16 7.5 L11 16 Z" fill="#b5bcc5"/><path d="M5 0 L16 4 L11 12.5 L0 9 Z" fill="#3ea56c"/><path d="M5 0 L16 4 L15 5.5 L4.5 1.5 Z" fill="#2a8a55"/><path d="M9 3.5 L13.5 5" stroke="#e8f8ee" stroke-width="1.4"/><rect x="5" y="9" width="9" height="4" rx="1" fill="#1c6ee0"/><rect x="8" y="13" width="2" height="3" fill="#d02020"/><rect x="8" y="0" width="8" height="8" fill="#f28a1e"/><circle cx="12" cy="4" r="2.6" fill="#fff"/><path d="M12 0 V8 M8 4 H16" stroke="#fff" stroke-width="1.2"/><circle cx="12" cy="4" r="1.2" fill="#f28a1e"/></svg>
<div class="r" style="left:364px;top:108px;width:1px;height:21px;background:#a0a0a0;"></div>
<div class="r" style="left:365px;top:108px;width:1px;height:21px;background:#fff;"></div>
<svg style="left:372px;top:109px" width="16" height="16" viewBox="0 0 16 16"><path d="M1 9 L8 2 L15 9" stroke="#a04010" stroke-width="1.5" fill="none"/><rect x="3" y="8" width="10" height="8" fill="#fff" stroke="#bbb"/><rect x="5" y="10" width="3" height="6" fill="#f0a030"/><rect x="9" y="10" width="3" height="3" fill="#4090e0"/><rect x="8" y="0" width="8" height="8" fill="#f28a1e"/><circle cx="12" cy="4" r="2.6" fill="#fff"/><path d="M12 0 V8 M8 4 H16" stroke="#fff" stroke-width="1.2"/><circle cx="12" cy="4" r="1.2" fill="#f28a1e"/></svg>
<svg style="left:395px;top:109px" width="16" height="16" viewBox="0 0 16 16"><path d="M1 9 L8 2 L15 9" stroke="#a04010" stroke-width="1.5" fill="none"/><rect x="3" y="8" width="10" height="8" fill="#fff" stroke="#bbb"/><rect x="5" y="10" width="8" height="3" fill="#2d7fe0"/><rect x="8" y="13" width="2" height="3" fill="#d02020"/><rect x="8" y="0" width="8" height="8" fill="#f28a1e"/><circle cx="12" cy="4" r="2.6" fill="#fff"/><path d="M12 0 V8 M8 4 H16" stroke="#fff" stroke-width="1.2"/><circle cx="12" cy="4" r="1.2" fill="#f28a1e"/></svg>
<div class="r" style="left:416px;top:108px;width:1px;height:21px;background:#a0a0a0;"></div>
<div class="r" style="left:417px;top:108px;width:1px;height:21px;background:#fff;"></div>
<svg style="left:423px;top:109px" width="16" height="16" viewBox="0 0 16 16"><rect x="1.5" y="2.5" width="14" height="13" fill="#fff" stroke="#888"/><rect x="0" y="0" width="8" height="8" fill="#aaa"/><circle cx="4" cy="4" r="2.6" fill="#fff"/><path d="M4 0 V8 M0 4 H8" stroke="#fff" stroke-width="1.2"/><circle cx="4" cy="4" r="1.2" fill="#aaa"/><text x="6" y="14" font-size="10" font-family="Liberation Sans" fill="#000">Р</text></svg>
<svg style="left:446px;top:109px" width="16" height="16" viewBox="0 0 16 16"><rect x="1.5" y="2.5" width="14" height="13" fill="#fff" stroke="#888"/><rect x="0" y="0" width="8" height="8" fill="#aaa"/><circle cx="4" cy="4" r="2.6" fill="#fff"/><path d="M4 0 V8 M0 4 H8" stroke="#fff" stroke-width="1.2"/><circle cx="4" cy="4" r="1.2" fill="#aaa"/><text x="2" y="14" font-size="9" font-family="Liberation Sans" fill="#000">ПР</text></svg>
<svg style="left:472px;top:110px" width="16" height="16" viewBox="0 0 16 16"><path d="M6 1 L11 6 H8 V13 H4 V6 H1 Z" fill="#8c8c8c"/></svg>
<svg style="left:495px;top:110px" width="16" height="16" viewBox="0 0 16 16"><path d="M6 13 L11 8 H8 V1 H4 V8 H1 Z" fill="#8c8c8c"/></svg>
<div class="r" style="left:514px;top:108px;width:1px;height:21px;background:#a0a0a0;"></div>
<div class="r" style="left:515px;top:108px;width:1px;height:21px;background:#fff;"></div>
<svg style="left:521px;top:109px" width="16" height="16" viewBox="0 0 16 16"><path d="M3 8 L8 2 L13 8" stroke="#a04010" stroke-width="1.3" fill="none"/><path d="M0 13 L3 10 L6 13 M10 13 L13 10 L16 13" stroke="#a04010" stroke-width="1.3" fill="none"/><rect x="1" y="13" width="4" height="3" fill="#f0a030"/><rect x="11" y="13" width="4" height="3" fill="#f0a030"/><rect x="7" y="6" width="3" height="3" fill="#4090e0"/></svg>
<svg style="left:544px;top:109px" width="16" height="16" viewBox="0 0 16 16"><rect x="3" y="1" width="12" height="11" fill="#b8b8b8"/><rect x="0.5" y="3.5" width="12" height="12" fill="#bdbdbd" stroke="#a8a8a8"/><text x="2" y="9" font-size="6" font-family="Liberation Mono" font-weight="bold" fill="#fff">01</text><text x="4" y="14.5" font-size="6" font-family="Liberation Mono" font-weight="bold" fill="#fff">10</text><rect x="8" y="0" width="8" height="8" fill="#9a9a9a"/><circle cx="12" cy="4" r="2.6" fill="#fff"/><path d="M12 0 V8 M8 4 H16" stroke="#fff" stroke-width="1.2"/><circle cx="12" cy="4" r="1.2" fill="#9a9a9a"/></svg>
<div class="r" style="left:566px;top:108px;width:1px;height:21px;background:#a0a0a0;"></div>
<div class="r" style="left:567px;top:108px;width:1px;height:21px;background:#fff;"></div>
<svg style="left:573px;top:109px" width="16" height="16" viewBox="0 0 16 16"><defs><linearGradient id="gg" x1="0" y1="0" x2="0" y2="1"><stop offset="0" stop-color="#f4f4f4"/><stop offset="1" stop-color="#a4a4a4"/></linearGradient></defs><rect x="0.5" y="3.5" width="15" height="12" fill="url(#gg)" stroke="#8a8a8a"/><text x="1" y="14" font-size="10" font-family="Liberation Sans" fill="#444">%</text><rect x="8" y="0" width="8" height="8" fill="#9a9a9a"/><circle cx="12" cy="4" r="2.6" fill="#fff"/><path d="M12 0 V8 M8 4 H16" stroke="#fff" stroke-width="1.2"/><circle cx="12" cy="4" r="1.2" fill="#9a9a9a"/></svg>
<svg style="left:596px;top:109px" width="16" height="16" viewBox="0 0 16 16"><defs><linearGradient id="gg" x1="0" y1="0" x2="0" y2="1"><stop offset="0" stop-color="#f4f4f4"/><stop offset="1" stop-color="#a4a4a4"/></linearGradient></defs><rect x="0.5" y="3.5" width="15" height="12" fill="url(#gg)" stroke="#8a8a8a"/><text x="1" y="14" font-size="7" font-family="Liberation Sans" fill="#444">M29</text><rect x="8" y="0" width="8" height="8" fill="#9a9a9a"/><circle cx="12" cy="4" r="2.6" fill="#fff"/><path d="M12 0 V8 M8 4 H16" stroke="#fff" stroke-width="1.2"/><circle cx="12" cy="4" r="1.2" fill="#9a9a9a"/></svg>
<svg style="left:619px;top:109px" width="16" height="16" viewBox="0 0 16 16"><defs><linearGradient id="gg" x1="0" y1="0" x2="0" y2="1"><stop offset="0" stop-color="#f4f4f4"/><stop offset="1" stop-color="#a4a4a4"/></linearGradient></defs><rect x="0.5" y="3.5" width="15" height="12" fill="url(#gg)" stroke="#8a8a8a"/><text x="1" y="14" font-size="9" font-family="Liberation Sans" fill="#444">PP</text><rect x="8" y="0" width="8" height="8" fill="#9a9a9a"/><circle cx="12" cy="4" r="2.6" fill="#fff"/><path d="M12 0 V8 M8 4 H16" stroke="#fff" stroke-width="1.2"/><circle cx="12" cy="4" r="1.2" fill="#9a9a9a"/></svg>
<svg style="left:642px;top:109px" width="16" height="16" viewBox="0 0 16 16"><defs><linearGradient id="gg" x1="0" y1="0" x2="0" y2="1"><stop offset="0" stop-color="#f4f4f4"/><stop offset="1" stop-color="#a4a4a4"/></linearGradient></defs><rect x="0.5" y="3.5" width="15" height="12" fill="url(#gg)" stroke="#8a8a8a"/><text x="1" y="14" font-size="9" font-family="Liberation Sans" fill="#444">Ф3</text><rect x="8" y="0" width="8" height="8" fill="#9a9a9a"/><circle cx="12" cy="4" r="2.6" fill="#fff"/><path d="M12 0 V8 M8 4 H16" stroke="#fff" stroke-width="1.2"/><circle cx="12" cy="4" r="1.2" fill="#9a9a9a"/></svg>
<div class="r" style="left:664px;top:108px;width:1px;height:21px;background:#a0a0a0;"></div>
<div class="r" style="left:665px;top:108px;width:1px;height:21px;background:#fff;"></div>
<svg style="left:671px;top:109px" width="16" height="16" viewBox="0 0 16 16"><defs><linearGradient id="fy" x1="0" y1="0" x2="0" y2="1"><stop offset="0" stop-color="#fff8b0"/><stop offset="1" stop-color="#f8d000"/></linearGradient></defs><path d="M0.5 3.5 H6 L7 5 H15.5 V15.5 H0.5 Z" fill="#f8e070" stroke="#8a8090"/><rect x="1" y="6" width="14" height="9" fill="url(#fy)"/><rect x="8" y="0" width="8" height="8" fill="#f28a1e"/><circle cx="12" cy="4" r="2.6" fill="#fff"/><path d="M12 0 V8 M8 4 H16" stroke="#fff" stroke-width="1.2"/><circle cx="12" cy="4" r="1.2" fill="#f28a1e"/></svg>
<div class="r" style="left:693px;top:108px;width:1px;height:21px;background:#a0a0a0;"></div>
<div class="r" style="left:694px;top:108px;width:1px;height:21px;background:#fff;"></div>
<svg style="left:700px;top:110px" width="16" height="16" viewBox="0 0 16 16"><path d="M2 2 L12 12 M12 2 L2 12" stroke="#e02a2a" stroke-width="2"/></svg>
<div class="r" style="left:2px;top:131px;width:1753px;height:1px;background:#fff;"></div>
<div class="r" style="left:2px;top:132px;width:66px;height:20px;background:#f0f0f0;border-top:1px solid #fff;border-left:1px solid #fff;box-sizing:border-box;"></div>
<div class="r" style="left:66px;top:133px;width:1px;height:19px;background:#a0a0a0;"></div>
<div class="r" style="left:67px;top:134px;width:1px;height:18px;background:#696969;"></div>
<div class="t" style="left:10px;top:131px;">Структура</div>
<div class="r" style="left:2px;top:151px;width:552px;height:1px;background:#fff;"></div>
<div class="r" style="left:552px;top:151px;width:1px;height:936px;background:#7a7a7a;"></div>
<div class="r" style="left:553px;top:151px;width:1px;height:936px;background:#7a7a7a;"></div>
<div class="r" style="left:2px;top:1085px;width:552px;height:1px;background:#7a7a7a;"></div>
<div class="r" style="left:2px;top:1086px;width:552px;height:1px;background:#7a7a7a;"></div>
<div class="r" style="left:7px;top:157px;width:541px;height:924px;background:#fff;"></div>
<div class="r" style="left:5px;top:155px;width:544px;height:1px;background:#a0a0a0;"></div>
<div class="r" style="left:5px;top:155px;width:1px;height:927px;background:#a0a0a0;"></div>
<div class="r" style="left:6px;top:156px;width:542px;height:1px;background:#696969;"></div>
<div class="r" style="left:6px;top:156px;width:1px;height:925px;background:#696969;"></div>
<div class="r" style="left:548px;top:155px;width:1px;height:927px;background:#e3e3e3;"></div>
<div class="r" style="left:5px;top:1081px;width:544px;height:1px;background:#e3e3e3;"></div>
<div class="r" style="left:34px;top:173px;width:1px;height:169px;background:repeating-linear-gradient(#a0a0a0 0 1px,transparent 1px 2px)"></div>
<div class="r" style="left:53px;top:189px;width:1px;height:89px;background:repeating-linear-gradient(#a0a0a0 0 1px,transparent 1px 2px)"></div>
<div class="r" style="left:72px;top:205px;width:1px;height:9px;background:repeating-linear-gradient(#a0a0a0 0 1px,transparent 1px 2px)"></div>
<div class="r" style="left:72px;top:237px;width:1px;height:25px;background:repeating-linear-gradient(#a0a0a0 0 1px,transparent 1px 2px)"></div>
<div class="r" style="left:72px;top:285px;width:1px;height:9px;background:repeating-linear-gradient(#a0a0a0 0 1px,transparent 1px 2px)"></div>
<div class="r" style="left:21px;top:165px;width:6px;height:1px;background:repeating-linear-gradient(90deg,#a0a0a0 0 1px,transparent 1px 2px)"></div>
<div class="r" style="left:11px;top:161px;width:9px;height:9px;background:#fff;border:1px solid #919191;box-sizing:border-box;"></div>
<div class="r" style="left:13px;top:165px;width:5px;height:1px;background:#000;"></div>
<svg style="left:26px;top:158px" width="16" height="16" viewBox="0 0 16 16"><path d="M5.5 1 L0 12.5 H11.5 Z" fill="#2f6fd0"/><rect x="8" y="6" width="7" height="7" fill="#78c832"/><circle cx="7" cy="10" r="3.8" fill="#e8301c"/><circle cx="6" cy="8.8" r="1.3" fill="#ffa08a"/></svg>
<div class="t" style="left:48px;top:155px;">Проекты</div>
<div class="r" style="left:40px;top:181px;width:6px;height:1px;background:repeating-linear-gradient(90deg,#a0a0a0 0 1px,transparent 1px 2px)"></div>
<div class="r" style="left:30px;top:177px;width:9px;height:9px;background:#fff;border:1px solid #919191;box-sizing:border-box;"></div>
<div class="r" style="left:32px;top:181px;width:5px;height:1px;background:#000;"></div>
<svg style="left:45px;top:173px" width="16" height="16" viewBox="0 0 16 16"><rect x="1" y="5" width="5" height="10" rx="1" fill="#3a82d8"/><rect x="6" y="3" width="5" height="12" rx="1" fill="#2f78d8"/><rect x="11" y="7" width="5" height="8" rx="1" fill="#3a82d8"/><path d="M2 7.5 H5 M2 9.5 H5 M2 11.5 H5 M2 13.5 H5 M7 5.5 H10 M7 7.5 H10 M7 9.5 H10 M7 11.5 H10 M7 13.5 H10 M12 9.5 H15 M12 11.5 H15 M12 13.5 H15" stroke="#c8dcf8"/><rect x="6" y="0" width="1" height="3" fill="#444"/><path d="M7 0 H10 L11 1.5 H7 Z" fill="#e81010"/></svg>
<div class="t" style="left:67px;top:171px;">256-02-2025 [Здание спортивного комплекса]</div>
<div class="t" style="left:304px;top:171px;color:#0000ff;">[4]</div>
<div class="r" style="left:59px;top:197px;width:6px;height:1px;background:repeating-linear-gradient(90deg,#a0a0a0 0 1px,transparent 1px 2px)"></div>
<div class="r" style="left:49px;top:193px;width:9px;height:9px;background:#fff;border:1px solid #919191;box-sizing:border-box;"></div>
<div class="r" style="left:51px;top:197px;width:5px;height:1px;background:#000;"></div>
<svg style="left:63px;top:189px" width="16" height="16" viewBox="0 0 16 16"><rect x="1" y="1" width="12" height="1.2" fill="#808080"/><path d="M1.5 2 V16 M3.5 2 V16 M1.5 16 H6" stroke="#808080" fill="none"/><path d="M1.5 4 H3.5 M1.5 7 H3.5 M1.5 10 H3.5 M1.5 13 H3.5" stroke="#808080"/><path d="M0.5 0.5 H3 V2 H0.5 Z" fill="#9a60f0"/><path d="M12 0 H14 L15 3 V11 H12 Z" fill="#a070f0"/><path d="M6 8 L8.5 4 L10.5 8 Z" fill="#a878f0"/><path d="M4 8 L9 2 L15 8" stroke="#7a2020" stroke-width="0.9" stroke-dasharray="1 0.6" fill="none"/><rect x="3" y="8" width="13" height="2.2" fill="#f88010"/><rect x="3" y="10.2" width="13" height="1" fill="#8a3018"/><rect x="6" y="11" width="4" height="5" fill="#1c8cf8"/><rect x="11" y="11" width="5" height="5" fill="#1c8cf8"/><path d="M7 12.5 H9 M7 14.5 H9 M12 12.5 H15 M12 14.5 H15" stroke="#bfe0ff" stroke-dasharray="1 1"/></svg>
<div class="t" style="left:86px;top:187px;">ОСР-01-01&nbsp; [Подготовка территории строительства]</div>
<div class="t" style="left:355px;top:187px;color:#0000ff;">[1]</div>
<div class="r" style="left:78px;top:213px;width:6px;height:1px;background:repeating-linear-gradient(90deg,#a0a0a0 0 1px,transparent 1px 2px)"></div>
<div class="r" style="left:68px;top:209px;width:9px;height:9px;background:#fff;border:1px solid #919191;box-sizing:border-box;"></div>
<div class="r" style="left:70px;top:213px;width:5px;height:1px;background:#000;"></div>
<div class="r" style="left:72px;top:211px;width:1px;height:5px;background:#000;"></div>
<svg style="left:83px;top:205px" width="16" height="16" viewBox="0 0 16 16"><path d="M0 9 L11 12.5 L11 16 L0 12.5 Z" fill="#dde2e8"/><path d="M11 12.5 L16 4 L16 7.5 L11 16 Z" fill="#b5bcc5"/><path d="M5 0 L16 4 L11 12.5 L0 9 Z" fill="#3ea56c"/><path d="M5 0 L16 4 L15 5.5 L4.5 1.5 Z" fill="#2a8a55"/><path d="M9 3.5 L13.5 5" stroke="#e8f8ee" stroke-width="1.4"/></svg>
<div class="t" style="left:105px;top:203px;">ЛС 07-01 [Подготовительные работы (смета)]</div>
<div class="r" style="left:59px;top:229px;width:6px;height:1px;background:repeating-linear-gradient(90deg,#a0a0a0 0 1px,transparent 1px 2px)"></div>
<div class="r" style="left:49px;top:225px;width:9px;height:9px;background:#fff;border:1px solid #919191;box-sizing:border-box;"></div>
<div class="r" style="left:51px;top:229px;width:5px;height:1px;background:#000;"></div>
<svg style="left:63px;top:221px" width="16" height="16" viewBox="0 0 16 16"><rect x="1" y="1" width="12" height="1.2" fill="#808080"/><path d="M1.5 2 V16 M3.5 2 V16 M1.5 16 H6" stroke="#808080" fill="none"/><path d="M1.5 4 H3.5 M1.5 7 H3.5 M1.5 10 H3.5 M1.5 13 H3.5" stroke="#808080"/><path d="M0.5 0.5 H3 V2 H0.5 Z" fill="#9a60f0"/><path d="M12 0 H14 L15 3 V11 H12 Z" fill="#a070f0"/><path d="M6 8 L8.5 4 L10.5 8 Z" fill="#a878f0"/><path d="M4 8 L9 2 L15 8" stroke="#7a2020" stroke-width="0.9" stroke-dasharray="1 0.6" fill="none"/><rect x="3" y="8" width="13" height="2.2" fill="#f88010"/><rect x="3" y="10.2" width="13" height="1" fill="#8a3018"/><rect x="6" y="11" width="4" height="5" fill="#1c8cf8"/><rect x="11" y="11" width="5" height="5" fill="#1c8cf8"/><path d="M7 12.5 H9 M7 14.5 H9 M12 12.5 H15 M12 14.5 H15" stroke="#bfe0ff" stroke-dasharray="1 1"/></svg>
<div class="t" style="left:86px;top:219px;">ОСР-02-01 [Основные объекты строительства]</div>
<div class="t" style="left:330px;top:219px;color:#0000ff;">[2]</div>
<div class="r" style="left:78px;top:245px;width:6px;height:1px;background:repeating-linear-gradient(90deg,#a0a0a0 0 1px,transparent 1px 2px)"></div>
<div class="r" style="left:68px;top:241px;width:9px;height:9px;background:#fff;border:1px solid #919191;box-sizing:border-box;"></div>
<div class="r" style="left:70px;top:245px;width:5px;height:1px;background:#000;"></div>
<div class="r" style="left:72px;top:243px;width:1px;height:5px;background:#000;"></div>
<svg style="left:83px;top:237px" width="16" height="16" viewBox="0 0 16 16"><path d="M0 9 L11 12.5 L11 16 L0 12.5 Z" fill="#dde2e8"/><path d="M11 12.5 L16 4 L16 7.5 L11 16 Z" fill="#b5bcc5"/><path d="M5 0 L16 4 L11 12.5 L0 9 Z" fill="#3ea56c"/><path d="M5 0 L16 4 L15 5.5 L4.5 1.5 Z" fill="#2a8a55"/><path d="M9 3.5 L13.5 5" stroke="#e8f8ee" stroke-width="1.4"/></svg>
<div class="t" style="left:105px;top:235px;">ЛС-02-01 [Устройство котлована]</div>
<div class="r" style="left:78px;top:261px;width:6px;height:1px;background:repeating-linear-gradient(90deg,#a0a0a0 0 1px,transparent 1px 2px)"></div>
<div class="r" style="left:68px;top:257px;width:9px;height:9px;background:#fff;border:1px solid #919191;box-sizing:border-box;"></div>
<div class="r" style="left:70px;top:261px;width:5px;height:1px;background:#000;"></div>
<div class="r" style="left:72px;top:259px;width:1px;height:5px;background:#000;"></div>
<svg style="left:83px;top:253px" width="16" height="16" viewBox="0 0 16 16"><path d="M0 9 L11 12.5 L11 16 L0 12.5 Z" fill="#dde2e8"/><path d="M11 12.5 L16 4 L16 7.5 L11 16 Z" fill="#b5bcc5"/><path d="M5 0 L16 4 L11 12.5 L0 9 Z" fill="#3ea56c"/><path d="M5 0 L16 4 L15 5.5 L4.5 1.5 Z" fill="#2a8a55"/><path d="M9 3.5 L13.5 5" stroke="#e8f8ee" stroke-width="1.4"/></svg>
<div class="t" style="left:105px;top:251px;">ЛС-02-02 [Фундамент]</div>
<div class="r" style="left:59px;top:277px;width:6px;height:1px;background:repeating-linear-gradient(90deg,#a0a0a0 0 1px,transparent 1px 2px)"></div>
<div class="r" style="left:49px;top:273px;width:9px;height:9px;background:#fff;border:1px solid #919191;box-sizing:border-box;"></div>
<div class="r" style="left:51px;top:277px;width:5px;height:1px;background:#000;"></div>
<svg style="left:63px;top:269px" width="16" height="16" viewBox="0 0 16 16"><rect x="1" y="1" width="12" height="1.2" fill="#808080"/><path d="M1.5 2 V16 M3.5 2 V16 M1.5 16 H6" stroke="#808080" fill="none"/><path d="M1.5 4 H3.5 M1.5 7 H3.5 M1.5 10 H3.5 M1.5 13 H3.5" stroke="#808080"/><path d="M0.5 0.5 H3 V2 H0.5 Z" fill="#9a60f0"/><path d="M12 0 H14 L15 3 V11 H12 Z" fill="#a070f0"/><path d="M6 8 L8.5 4 L10.5 8 Z" fill="#a878f0"/><path d="M4 8 L9 2 L15 8" stroke="#7a2020" stroke-width="0.9" stroke-dasharray="1 0.6" fill="none"/><rect x="3" y="8" width="13" height="2.2" fill="#f88010"/><rect x="3" y="10.2" width="13" height="1" fill="#8a3018"/><rect x="6" y="11" width="4" height="5" fill="#1c8cf8"/><rect x="11" y="11" width="5" height="5" fill="#1c8cf8"/><path d="M7 12.5 H9 M7 14.5 H9 M12 12.5 H15 M12 14.5 H15" stroke="#bfe0ff" stroke-dasharray="1 1"/></svg>
<div class="t" style="left:86px;top:267px;">ОСР-03-01 [Объекты подсобного и обслуживающего назначения]</div>
<div class="t" style="left:423px;top:267px;color:#0000ff;">[1]</div>
<div class="r" style="left:78px;top:293px;width:6px;height:1px;background:repeating-linear-gradient(90deg,#a0a0a0 0 1px,transparent 1px 2px)"></div>
<div class="r" style="left:102px;top:285px;width:228px;height:16px;background:#eeeeee;"></div>
<div class="r" style="left:68px;top:289px;width:9px;height:9px;background:#fff;border:1px solid #919191;box-sizing:border-box;"></div>
<div class="r" style="left:70px;top:293px;width:5px;height:1px;background:#000;"></div>
<div class="r" style="left:72px;top:291px;width:1px;height:5px;background:#000;"></div>
<svg style="left:83px;top:285px" width="16" height="16" viewBox="0 0 16 16"><path d="M0 9 L11 12.5 L11 16 L0 12.5 Z" fill="#dde2e8"/><path d="M11 12.5 L16 4 L16 7.5 L11 16 Z" fill="#b5bcc5"/><path d="M5 0 L16 4 L11 12.5 L0 9 Z" fill="#3ea56c"/><path d="M5 0 L16 4 L15 5.5 L4.5 1.5 Z" fill="#2a8a55"/><path d="M9 3.5 L13.5 5" stroke="#e8f8ee" stroke-width="1.4"/></svg>
<div class="t" style="left:105px;top:283px;">ЛС-03-01 [Объекты подсобного назначения]</div>
<div class="r" style="left:40px;top:309px;width:6px;height:1px;background:repeating-linear-gradient(90deg,#a0a0a0 0 1px,transparent 1px 2px)"></div>
<div class="r" style="left:30px;top:305px;width:9px;height:9px;background:#fff;border:1px solid #919191;box-sizing:border-box;"></div>
<div class="r" style="left:32px;top:309px;width:5px;height:1px;background:#000;"></div>
<div class="r" style="left:34px;top:307px;width:1px;height:5px;background:#000;"></div>
<svg style="left:45px;top:302px" width="16" height="16" viewBox="0 0 16 16"><defs><linearGradient id="fg" x1="0" y1="1" x2="1" y2="0"><stop offset="0.3" stop-color="#ffff00"/><stop offset="1" stop-color="#ff8000"/></linearGradient></defs><path d="M0.5 0.5 H6.5 L7.5 2 H15.5 V13.5 H0.5 Z" fill="#ffcc00" stroke="#9a9ab0"/><rect x="1" y="2.5" width="14" height="10.5" fill="url(#fg)"/></svg>
<div class="t" style="left:67px;top:299px;">Новая папка [Новая папка]</div>
<div class="t" style="left:212px;top:299px;color:#0000ff;">[32]</div>
<div class="r" style="left:34px;top:325px;width:12px;height:1px;background:repeating-linear-gradient(90deg,#a0a0a0 0 1px,transparent 1px 2px)"></div>
<svg style="left:45px;top:318px" width="16" height="16" viewBox="0 0 16 16"><path d="M2.5 1.5 H7 L8 2.5 H13.5 V10 H2.5 Z" fill="#fde88a" stroke="#a8a8c0"/><path d="M0 9 Q3 8 6 9 L13 8.5 L14 12 Q10 15 6 14.5 Q2 13 0 9 Z" fill="#f0a050"/><path d="M5 11 H9" stroke="#8a4a10"/><path d="M15.5 7 V15" stroke="#333" stroke-width="1.2"/></svg>
<div class="t" style="left:67px;top:315px;">ОБМЕН</div>
<div class="t" style="left:111px;top:315px;color:#0000ff;">[0]</div>
<div class="r" style="left:40px;top:341px;width:6px;height:1px;background:repeating-linear-gradient(90deg,#a0a0a0 0 1px,transparent 1px 2px)"></div>
<div class="r" style="left:30px;top:337px;width:9px;height:9px;background:#fff;border:1px solid #919191;box-sizing:border-box;"></div>
<div class="r" style="left:32px;top:341px;width:5px;height:1px;background:#000;"></div>
<div class="r" style="left:34px;top:339px;width:1px;height:5px;background:#000;"></div>
<svg style="left:45px;top:334px" width="16" height="16" viewBox="0 0 16 16"><ellipse cx="7.5" cy="2" rx="3" ry="2" fill="#dde8f8" stroke="#aab"/><rect x="2" y="4" width="11" height="1.5" fill="#556070"/><rect x="0" y="7" width="15" height="1.5" fill="#556070"/><rect x="3" y="4" width="9" height="12" fill="#5a6878"/><path d="M4 6 H11 M4 9 H11 M4 11 H11 M4 13 H11 M4 15 H11" stroke="#c8d0dc" stroke-dasharray="1 1.2"/><rect x="1" y="15" width="13" height="1" fill="#556070"/></svg>
<div class="t" style="left:67px;top:331px;">КОРЗИНА</div>
<div class="r" style="left:557px;top:131px;width:1px;height:955px;background:#fff;"></div>
<div class="r" style="left:1753px;top:153px;width:1px;height:934px;background:#7a7a7a;"></div>
<div class="r" style="left:557px;top:1085px;width:1197px;height:1px;background:#7a7a7a;"></div>
<div class="r" style="left:557px;top:1086px;width:1197px;height:1px;background:#7a7a7a;"></div>
<div class="r" style="left:559px;top:153px;width:1194px;height:1px;background:#fff;"></div>
<div class="r" style="left:561px;top:135px;width:73px;height:18px;background:#f0f0f0;border-top:1px solid #fff;box-sizing:border-box;"></div>
<div class="t" style="left:566px;top:134px;">Содержание</div>
<div class="r" style="left:635px;top:133px;width:72px;height:21px;background:#f0f0f0;border-top:1px solid #fff;border-left:1px solid #fff;box-sizing:border-box;"></div>
<div class="r" style="left:706px;top:134px;width:1px;height:19px;background:#a0a0a0;"></div>
<div class="r" style="left:707px;top:134px;width:1px;height:19px;background:#696969;"></div>
<div class="t" style="left:641px;top:132px;">Параметры</div>
<div class="r" style="left:708px;top:135px;width:99px;height:18px;background:#f0f0f0;border-top:1px solid #fff;box-sizing:border-box;"></div>
<div class="r" style="left:806px;top:136px;width:1px;height:16px;background:#a0a0a0;"></div>
<div class="r" style="left:807px;top:136px;width:1px;height:16px;background:#696969;"></div>
<div class="t" style="left:712px;top:134px;">Объектная смета</div>
<div class="r" style="left:808px;top:135px;width:58px;height:18px;background:#f0f0f0;border-top:1px solid #fff;box-sizing:border-box;"></div>
<div class="r" style="left:865px;top:136px;width:1px;height:16px;background:#a0a0a0;"></div>
<div class="r" style="left:866px;top:136px;width:1px;height:16px;background:#696969;"></div>
<div class="t" style="left:814px;top:134px;">ССР и СЗ</div>
<div class="r" style="left:867px;top:135px;width:43px;height:18px;background:#f0f0f0;border-top:1px solid #fff;box-sizing:border-box;"></div>
<div class="r" style="left:909px;top:136px;width:1px;height:16px;background:#a0a0a0;"></div>
<div class="r" style="left:910px;top:136px;width:1px;height:16px;background:#696969;"></div>
<div class="t" style="left:873px;top:134px;">НМЦК</div>
<div class="r" style="left:911px;top:135px;width:196px;height:18px;background:#f0f0f0;border-top:1px solid #fff;box-sizing:border-box;"></div>
<div class="r" style="left:1106px;top:136px;width:1px;height:16px;background:#a0a0a0;"></div>
<div class="r" style="left:1107px;top:136px;width:1px;height:16px;background:#696969;"></div>
<div class="t" style="left:917px;top:134px;">Исполнение Сметы контракта (ЕИС)</div>
<div class="r" style="left:635px;top:153px;width:72px;height:1px;background:#f0f0f0;"></div>
<div class="r" style="left:562px;top:156px;width:1189px;height:31px;background:#ffffe1;"></div>
<div class="r" style="left:562px;top:187px;width:1189px;height:1px;background:#a0a0a0;"></div>
<div class="r" style="left:562px;top:188px;width:1189px;height:1px;background:#fff;"></div>
<div class="t" style="left:567px;top:161px;font-size:12px;font-weight:bold;color:#0000e0;letter-spacing:0.06px;">Параметры объекта отличаются от параметров ТН, назначенных на папку</div>
<div class="r" style="left:1649px;top:160px;width:97px;height:21px;box-sizing:border-box;border:1px solid #707070;border-radius:3px;background:linear-gradient(#f6f6f6,#e3e3e3)"></div>
<div class="t" style="left:1649px;width:97px;text-align:center;top:161px">Подробно</div>
<div class="r" style="left:568px;top:196px;width:13px;height:13px;background:#fff;border:1px solid;border-color:#a0a0a0 #fff #fff #a0a0a0;box-sizing:border-box;box-shadow:inset 1px 1px #e3e3e3;"></div>
<div class="t" style="left:584px;top:193px;">Проектная смета утверждена</div>
<div class="r" style="left:562px;top:219px;width:1189px;height:1px;background:#a0a0a0;"></div>
<div class="r" style="left:562px;top:220px;width:1189px;height:1px;background:#fff;"></div>
<div class="t" style="left:569px;top:225px;">Типовые настройки:</div>
<div class="r" style="left:678px;top:228px;width:1066px;height:15px;background:#fff;"></div>
<div class="r" style="left:1730px;top:229px;width:13px;height:13px;background:#f0f0f0;"></div>
<svg style="left:1733px;top:234px" width="7" height="4" viewBox="0 0 7 4"><path d="M0 0 H7 L3.5 4 Z" fill="#000"/></svg>
<div class="t" style="left:679px;top:226px;">ФСНБ-2022_И12</div>
<div class="r" style="left:562px;top:251px;width:1189px;height:1px;background:#a0a0a0;"></div>
<div class="r" style="left:562px;top:252px;width:1189px;height:1px;background:#fff;"></div>
<div class="r" style="left:568px;top:260px;width:13px;height:13px;background:#fff;border:1px solid;border-color:#a0a0a0 #fff #fff #a0a0a0;box-sizing:border-box;box-shadow:inset 1px 1px #e3e3e3;"></div>
<svg style="left:568px;top:260px" width="13" height="13" viewBox="0 0 13 13"><rect x="3" y="5" width="1" height="3" fill="#000"/><rect x="4" y="6" width="1" height="3" fill="#000"/><rect x="5" y="7" width="1" height="3" fill="#000"/><rect x="6" y="6" width="1" height="3" fill="#000"/><rect x="7" y="5" width="1" height="3" fill="#000"/><rect x="8" y="4" width="1" height="3" fill="#000"/><rect x="9" y="3" width="1" height="3" fill="#000"/></svg>
<div class="t" style="left:584px;top:257px;">Применять индексы в соответствии с 421пр</div>
<div class="r" style="left:825px;top:260px;width:214px;height:15px;background:#fff;"></div>
<div class="r" style="left:1025px;top:261px;width:13px;height:13px;background:#f0f0f0;"></div>
<svg style="left:1028px;top:266px" width="7" height="4" viewBox="0 0 7 4"><path d="M0 0 H7 L3.5 4 Z" fill="#000"/></svg>
<div class="t" style="left:828px;top:258px;">за итогом к элементам ПЗ</div>
<div class="r" style="left:562px;top:281px;width:145px;height:770px;background:#fff;"></div>
<div class="r" style="left:562px;top:281px;width:145px;height:1px;background:#a0a0a0;"></div>
<div class="r" style="left:562px;top:281px;width:1px;height:770px;background:#a0a0a0;"></div>
<div class="r" style="left:706px;top:281px;width:1px;height:770px;background:#a0a0a0;"></div>
<div class="r" style="left:562px;top:1050px;width:145px;height:1px;background:#a0a0a0;"></div>
<div class="t" style="left:569px;top:281px;">Уровни цен (2)</div>
<div class="t" style="left:569px;top:297px;">Типовой расчет</div>
<div class="t" style="left:569px;top:313px;">Способ расчета</div>
<div class="t" style="left:569px;top:329px;">Поправки</div>
<div class="t" style="left:569px;top:345px;">Работа со строками</div>
<div class="t" style="left:569px;top:361px;">Поисковые маршруты</div>
<div class="t" style="left:569px;top:377px;">Наименования</div>
<div class="r" style="left:564px;top:395px;width:142px;height:16px;background:#0078d7;"></div>
<div class="t" style="left:569px;top:393px;color:#fff;">Описание</div>
<div class="t" style="left:569px;top:409px;">Должностные лица</div>
<div class="t" style="left:569px;top:425px;">Статистика</div>
<div class="t" style="left:569px;top:441px;">Ревизия</div>
<div class="r" style="left:708px;top:281px;width:1042px;height:1px;background:#a0a0a0;"></div>
<div class="r" style="left:708px;top:281px;width:1px;height:770px;background:#a0a0a0;"></div>
<div class="r" style="left:1749px;top:281px;width:1px;height:770px;background:#a0a0a0;"></div>
<div class="r" style="left:708px;top:1050px;width:1042px;height:1px;background:#a0a0a0;"></div>
<div class="r" style="left:709px;top:282px;width:1040px;height:1px;background:#fff;"></div>
<div class="r" style="left:709px;top:282px;width:1px;height:768px;background:#fff;"></div>
<div class="t" style="left:714px;top:291px;">Величина строительного объёма:</div>
<div class="r" style="left:906px;top:293px;width:66px;height:15px;background:#fff;"></div>
<div class="t" style="left:908px;top:291px;">0</div>
<div class="t" style="left:1572px;top:291px;">Единица измерения:</div>
<div class="r" style="left:1682px;top:293px;width:61px;height:15px;background:#fff;"></div>
<div class="t" style="left:1684px;top:291px;">м</div>
<div class="t" style="left:714px;top:310px;">Конструктивное решение (элемент):</div>
<div class="r" style="left:904px;top:310px;width:840px;height:18px;background:#fff;border:1px solid;border-color:#a0a0a0 #fff #fff #a0a0a0;box-sizing:border-box;"></div>
<div class="t" style="left:908px;top:310px;">Линия ЭП</div>
<div class="r" style="left:1728px;top:312px;width:15px;height:15px;background:#f0f0f0;border:1px solid;border-color:#fff #a0a0a0 #a0a0a0 #fff;box-sizing:border-box;"></div>
<div class="r" style="left:1730px;top:318px;width:2px;height:2px;background:#000;"></div>
<div class="r" style="left:1734px;top:318px;width:2px;height:2px;background:#000;"></div>
<div class="r" style="left:1738px;top:318px;width:2px;height:2px;background:#000;"></div>
<div class="t" style="left:714px;top:329px;">Стадийность проектирования:</div>
<div class="r" style="left:906px;top:331px;width:837px;height:15px;background:#fff;"></div>
<div class="r" style="left:1729px;top:332px;width:13px;height:13px;background:#f0f0f0;"></div>
<svg style="left:1732px;top:337px" width="7" height="4" viewBox="0 0 7 4"><path d="M0 0 H7 L3.5 4 Z" fill="#000"/></svg>
<div class="t" style="left:908px;top:329px;">1</div>
<div class="t" style="left:714px;top:348px;">Дата начала строительства:</div>
<div class="r" style="left:906px;top:350px;width:837px;height:15px;background:#fff;"></div>
<div class="r" style="left:1729px;top:351px;width:13px;height:13px;background:#f0f0f0;"></div>
<svg style="left:1732px;top:356px" width="7" height="4" viewBox="0 0 7 4"><path d="M0 0 H7 L3.5 4 Z" fill="#000"/></svg>
<div class="t" style="left:714px;top:367px;">Дата окончания строительства:</div>
<div class="r" style="left:906px;top:369px;width:837px;height:15px;background:#fff;"></div>
<div class="r" style="left:1729px;top:370px;width:13px;height:13px;background:#f0f0f0;"></div>
<svg style="left:1732px;top:375px" width="7" height="4" viewBox="0 0 7 4"><path d="M0 0 H7 L3.5 4 Z" fill="#000"/></svg>
<div class="t" style="left:714px;top:386px;">В каких ценах:</div>
<div class="t" style="left:842px;top:386px;">месяц:</div>
<div class="r" style="left:904px;top:387px;width:200px;height:17px;background:#fff;border:1px solid;border-color:#a0a0a0 #fff #fff #a0a0a0;box-sizing:border-box;"></div>
<div class="r" style="left:1674px;top:390px;width:13px;height:13px;background:#fff;border:1px solid;border-color:#a0a0a0 #fff #fff #a0a0a0;box-sizing:border-box;box-shadow:inset 1px 1px #e3e3e3;"></div>
<svg style="left:1674px;top:390px" width="13" height="13" viewBox="0 0 13 13"><rect x="3" y="5" width="1" height="3" fill="#000"/><rect x="4" y="6" width="1" height="3" fill="#000"/><rect x="5" y="7" width="1" height="3" fill="#000"/><rect x="6" y="6" width="1" height="3" fill="#000"/><rect x="7" y="5" width="1" height="3" fill="#000"/><rect x="8" y="4" width="1" height="3" fill="#000"/><rect x="9" y="3" width="1" height="3" fill="#000"/></svg>
<div class="t" style="left:1690px;top:387px;">в текущих</div>
<div class="t" style="left:714px;top:404px;">Список чертежей:</div>
<div class="r" style="left:714px;top:422px;width:1030px;height:59px;background:#fff;border:1px solid;border-color:#a0a0a0 #e8e8e8 #e8e8e8 #a0a0a0;box-sizing:border-box;"></div>
<div class="t" style="left:714px;top:481px;">Описание:</div>
<div class="r" style="left:714px;top:499px;width:1030px;height:59px;background:#fff;border:1px solid;border-color:#a0a0a0 #e8e8e8 #e8e8e8 #a0a0a0;box-sizing:border-box;"></div>
<div class="t" style="left:714px;top:558px;">Адрес объекта:</div>
<div class="r" style="left:714px;top:576px;width:1030px;height:59px;background:#fff;border:1px solid;border-color:#a0a0a0 #e8e8e8 #e8e8e8 #a0a0a0;box-sizing:border-box;"></div>
<div class="t" style="left:714px;top:635px;">Номер спецификации:</div>
<div class="r" style="left:714px;top:653px;width:1030px;height:59px;background:#fff;border:1px solid;border-color:#a0a0a0 #e8e8e8 #e8e8e8 #a0a0a0;box-sizing:border-box;"></div>
<div class="t" style="left:714px;top:712px;">Прочие:</div>
<div class="r" style="left:714px;top:730px;width:1030px;height:59px;background:#fff;border:1px solid;border-color:#a0a0a0 #e8e8e8 #e8e8e8 #a0a0a0;box-sizing:border-box;"></div>
<div class="t" style="left:714px;top:792px;">Регион:</div>
<div class="r" style="left:772px;top:794px;width:971px;height:15px;background:#fff;"></div>
<div class="r" style="left:1729px;top:795px;width:13px;height:13px;background:#f0f0f0;"></div>
<svg style="left:1732px;top:800px" width="7" height="4" viewBox="0 0 7 4"><path d="M0 0 H7 L3.5 4 Z" fill="#000"/></svg>
<div class="t" style="left:774px;top:792px;">-Не выбран-</div>
<div class="t" style="left:714px;top:813px;">Подрайон:</div>
<div class="r" style="left:772px;top:815px;width:972px;height:15px;background:#fff;"></div>
<div class="t" style="left:714px;top:831px;">Номер ВОР:</div>
<div class="r" style="left:712px;top:849px;width:1032px;height:59px;background:#fff;border:1px solid;border-color:#a0a0a0 #e8e8e8 #e8e8e8 #a0a0a0;box-sizing:border-box;"></div>
<div class="r" style="left:562px;top:1052px;width:1188px;height:1px;background:#a0a0a0;"></div>
<div class="r" style="left:562px;top:1052px;width:1px;height:30px;background:#a0a0a0;"></div>
<div class="r" style="left:562px;top:1081px;width:1188px;height:1px;background:#fff;"></div>
<div class="r" style="left:1558px;top:1056px;width:93px;height:24px;box-sizing:border-box;border:1px solid;border-color:#fff #696969 #696969 #fff;box-shadow:inset -1px -1px #a0a0a0;background:#f0f0f0"></div>
<div class="t" style="left:1558px;width:93px;text-align:center;top:1058px"><u>П</u>рименить</div>
<div class="r" style="left:1653px;top:1056px;width:93px;height:24px;box-sizing:border-box;border:1px solid;border-color:#fff #696969 #696969 #fff;box-shadow:inset -1px -1px #a0a0a0;background:#f0f0f0"></div>
<div class="t" style="left:1653px;width:93px;text-align:center;top:1058px"><u>О</u>тмена</div>
<div class="r" style="left:0px;top:1087px;width:1755px;height:1px;background:#fff;"></div>
<div class="r" style="left:0px;top:1088px;width:1755px;height:1px;background:#fff;"></div>
<div class="r" style="left:4px;top:1090px;width:85px;height:26px;background:#f0f0f0;border:1px solid;border-color:#a0a0a0 #fff #fff #a0a0a0;box-sizing:border-box;"></div>
<div class="r" style="left:93px;top:1090px;width:298px;height:26px;background:#f0f0f0;border:1px solid;border-color:#a0a0a0 #fff #fff #a0a0a0;box-sizing:border-box;"></div>
<div class="r" style="left:393px;top:1090px;width:1292px;height:26px;background:#f0f0f0;border:1px solid;border-color:#a0a0a0 #fff #fff #a0a0a0;box-sizing:border-box;"></div>
<div class="r" style="left:1688px;top:1090px;width:31px;height:26px;background:#f0f0f0;border:1px solid;border-color:#a0a0a0 #fff #fff #a0a0a0;box-sizing:border-box;"></div>
<div class="r" style="left:1723px;top:1090px;width:28px;height:26px;background:#f0f0f0;border:1px solid;border-color:#a0a0a0 #fff #fff #a0a0a0;box-sizing:border-box;"></div>
<div class="r" style="left:90px;top:1089px;width:1px;height:28px;background:#a0a0a0;"></div>
<div class="r" style="left:391px;top:1089px;width:1px;height:28px;background:#a0a0a0;"></div>
<div class="r" style="left:1686px;top:1089px;width:1px;height:28px;background:#a0a0a0;"></div>
<div class="r" style="left:1720px;top:1089px;width:1px;height:28px;background:#a0a0a0;"></div>
<svg style="left:1695px;top:1095px" width="17" height="17" viewBox="0 0 17 17"><circle cx="8.5" cy="8.5" r="7.5" fill="#9a9a9a"/><rect x="7.5" y="7" width="2" height="6" fill="#fff"/><rect x="7.5" y="4" width="2" height="2" fill="#fff"/><path d="M1 1 L16 16" stroke="#e00000" stroke-width="1.8"/></svg>
<div class="t" style="left:1730px;top:1093px;">RU</div>
<div class="r" style="left:0px;top:1117px;width:1755px;height:1px;background:#a0a0a0;"></div>
<div class="r" style="left:0px;top:1118px;width:1755px;height:1px;background:#fff;"></div>
<div class="r" style="left:0px;top:1119px;width:1755px;height:1px;background:#7a7a7a;"></div>
<div class="r" style="left:910px;top:329px;width:688px;height:494px;background:#fff;border:1px solid #646464;box-sizing:border-box;"></div>
<div class="r" style="left:911px;top:336px;width:686px;height:1px;background:#a0a0a0;"></div>
<div class="r" style="left:911px;top:337px;width:686px;height:16px;background:#f0f0f0;"></div>
<div class="r" style="left:911px;top:353px;width:686px;height:1px;background:#a0a0a0;"></div>
<div class="r" style="left:938px;top:353px;width:659px;height:1px;background:#7a7a7a;"></div>
<div class="r" style="left:922px;top:337px;width:1px;height:65px;background:#a0a0a0;"></div>
<div class="r" style="left:1440px;top:339px;width:1px;height:13px;background:#c8c8c8;"></div>
<div class="r" style="left:1596px;top:337px;width:1px;height:65px;background:#7a7a7a;"></div>
<div class="t" style="left:926px;top:335px;">Наименование</div>
<div class="t" style="left:1444px;top:335px;">Ед.изм</div>
<div class="r" style="left:911px;top:354px;width:11px;height:15px;background:#f0f0f0;"></div>
<div class="r" style="left:911px;top:369px;width:12px;height:1px;background:#a0a0a0;"></div>
<div class="r" style="left:911px;top:370px;width:11px;height:15px;background:#f0f0f0;"></div>
<div class="r" style="left:911px;top:385px;width:12px;height:1px;background:#a0a0a0;"></div>
<div class="r" style="left:911px;top:386px;width:11px;height:15px;background:#f0f0f0;"></div>
<div class="r" style="left:911px;top:401px;width:12px;height:1px;background:#a0a0a0;"></div>
<svg style="left:914px;top:390px" width="6" height="8" viewBox="0 0 6 8"><path d="M0 0 L6 4 L0 8 Z" fill="#000"/></svg>
<div class="r" style="left:939px;top:386px;width:501px;height:15px;background:#0078d7;"></div>
<div class="r" style="left:938px;top:369px;width:659px;height:1px;background:#7a7a7a;"></div>
<div class="r" style="left:938px;top:385px;width:659px;height:1px;background:#7a7a7a;"></div>
<div class="r" style="left:938px;top:401px;width:659px;height:1px;background:#7a7a7a;"></div>
<div class="r" style="left:938px;top:353px;width:1px;height:49px;background:#7a7a7a;"></div>
<div class="r" style="left:1440px;top:353px;width:1px;height:49px;background:#7a7a7a;"></div>
<div class="t" style="left:942px;top:352px;">Конструкция</div>
<div class="t" style="left:1444px;top:352px;">конструкция</div>
<div class="t" style="left:943px;top:368px;">Дорога</div>
<div class="t" style="left:1444px;top:368px;">км</div>
<div class="t" style="left:942px;top:384px;color:#fff;">Линия ЭП</div>
<div class="t" style="left:1444px;top:384px;">м</div>
<div class="r" style="left:911px;top:728px;width:686px;height:93px;background:#f0f0f0;"></div>
<div class="r" style="left:911px;top:728px;width:686px;height:1px;background:#a0a0a0;"></div>
<div class="r" style="left:911px;top:729px;width:686px;height:1px;background:#fff;"></div>
<div class="t" style="left:919px;top:729px;">Укажите текст для поиска:</div>
<div class="r" style="left:918px;top:750px;width:434px;height:20px;background:#fff;border:1px solid;border-color:#a0a0a0 #fff #fff #a0a0a0;box-sizing:border-box;"></div>
<div class="r" style="left:1358px;top:747px;width:120px;height:25px;box-sizing:border-box;border:1px solid #c4c4c4;border-radius:3px;background:linear-gradient(#fbfbfb,#ececec);"></div>
<div class="t" style="left:1401px;top:751px;color:#808080;">Искать ниже</div>
<div class="r" style="left:1478px;top:747px;width:119px;height:25px;box-sizing:border-box;border:1px solid #c4c4c4;border-radius:3px;background:linear-gradient(#fbfbfb,#ececec);border-right:none;border-radius:3px 0 0 3px;"></div>
<div class="t" style="left:1518px;top:751px;color:#808080;">Искать выше</div>
<svg style="left:1382px;top:751px" width="14" height="16" viewBox="0 0 14 16"><rect x="2" y="1" width="10" height="2" fill="#1a6de0"/><path d="M1.5 4.5 H11.5 V10.5 L8.5 12 H5.5 V14.5 L3.5 15.5 V11 L1.5 9 Z" fill="#fbf6d8" stroke="#555" stroke-width="1"/></svg>
<svg style="left:1500px;top:750px" width="14" height="17" viewBox="0 0 14 17"><path d="M5.5 1.5 V8 M5.5 2 L7 2 V7 L11.5 8 V13.5 H3.5 L1.5 10 L3.5 9 L4 9 V2 Z" fill="#fbf6d8" stroke="#555" stroke-width="1"/><rect x="3" y="14" width="9" height="2" fill="#1a6de0"/></svg>
<div class="r" style="left:911px;top:779px;width:686px;height:1px;background:#a0a0a0;"></div>
<div class="r" style="left:911px;top:780px;width:686px;height:1px;background:#fff;"></div>
<div class="r" style="left:1434px;top:789px;width:75px;height:25px;box-sizing:border-box;border:1px solid;border-color:#fff #696969 #696969 #fff;box-shadow:inset -1px -1px #a0a0a0;background:#f0f0f0"></div>
<div class="t" style="left:1434px;width:75px;text-align:center;top:791px">Выбрать</div>
<div class="r" style="left:1514px;top:789px;width:75px;height:25px;box-sizing:border-box;border:1px solid;border-color:#fff #696969 #696969 #fff;box-shadow:inset -1px -1px #a0a0a0;background:#f0f0f0"></div>
<div class="t" style="left:1514px;width:75px;text-align:center;top:791px">Закрыть</div>
<div class="r" style="left:1754px;top:2px;width:1px;height:1118px;background:#8a8a8a;"></div>
</body></html>
